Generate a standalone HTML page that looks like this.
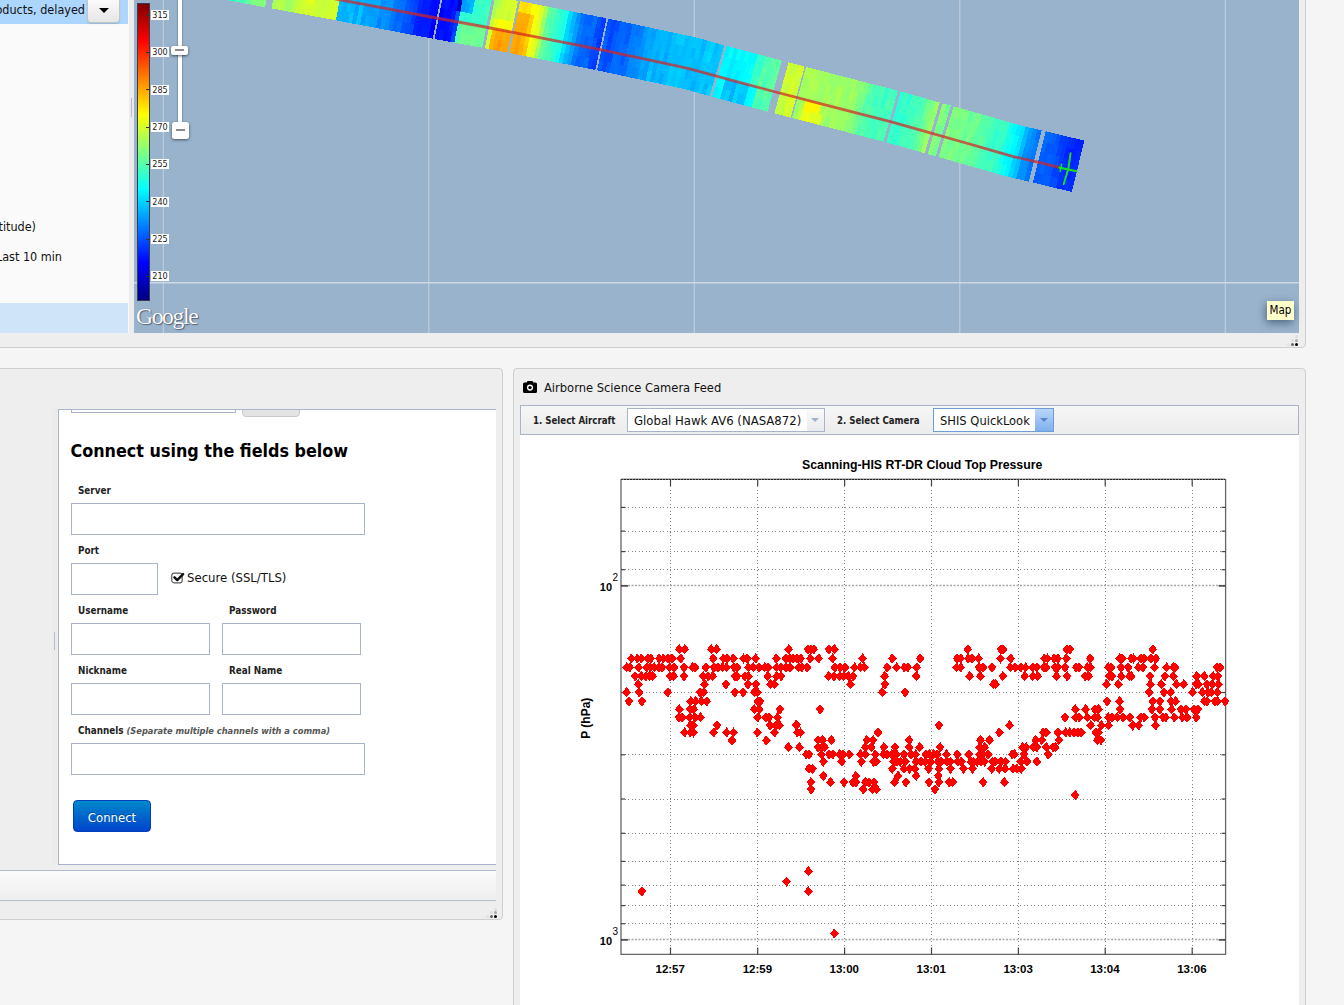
<!DOCTYPE html>
<html><head><meta charset="utf-8"><title>Mission Tools Suite</title>
<style>
html,body{margin:0;padding:0}
body{width:1344px;height:1005px;overflow:hidden;position:relative;background:#f5f5f5;font-stretch:condensed;font-family:"DejaVu Sans Condensed","DejaVu Sans","Liberation Sans",sans-serif;font-size:13px;color:#111}
.abs{position:absolute}
.panel{position:absolute;background:#eeeeee;border:1px solid #cfcfcf;border-radius:4px;box-sizing:border-box}
.inp{position:absolute;background:#fff;border:1px solid #a9b4c8;box-sizing:border-box}
.lbl{position:absolute;font-weight:bold;font-size:9.8px;color:#222;white-space:nowrap}
.cl{position:absolute;left:151px;width:18px;height:10px;background:#fff;font-size:9px;line-height:10px;text-align:center;color:#222;font-family:"DejaVu Sans","Liberation Sans",sans-serif}
.ct{position:absolute;left:146px;width:4px;height:1px;background:#333}
.dot{position:absolute;width:3px;height:3px;border-radius:50%}
</style></head><body>

<!-- ===== top panel ===== -->
<div class="panel" style="left:-10px;top:-10px;width:1316px;height:358px"></div>
<!-- left sidebar -->
<div class="abs" style="left:0;top:0;width:129px;height:333px;background:#fafafa"></div>
<div class="abs" style="left:0;top:0;width:128px;height:24px;background:#add6ff"></div>
<div class="abs" style="left:-20px;top:2px;width:105px;text-align:right;white-space:nowrap;font-size:12.5px;line-height:16px;color:#111">oducts, delayed</div>
<div class="abs" style="left:87px;top:-6px;width:33px;height:28.5px;box-sizing:border-box;border:1px solid #c4c4c4;border-radius:4px;background:linear-gradient(#ffffff,#e6e6e6);box-shadow:0 1px 1px rgba(0,0,0,.15)"></div>
<div class="abs" style="left:99px;top:8px;width:0;height:0;border-left:5px solid transparent;border-right:5px solid transparent;border-top:5px solid #000"></div>
<div class="abs" style="left:-20px;top:219px;width:56px;text-align:right;white-space:nowrap;font-size:12.5px;line-height:16px">titude)</div>
<div class="abs" style="left:-20px;top:249px;width:82px;text-align:right;white-space:nowrap;font-size:12.5px;line-height:16px">Last 10 min</div>
<div class="abs" style="left:0;top:303px;width:128px;height:30px;background:#cfe3f9"></div>
<!-- splitter -->
<div class="abs" style="left:129px;top:0;width:5px;height:333px;background:#ebebeb"></div>
<div class="abs" style="left:131px;top:98px;width:1px;height:19px;background:#b8bcc8"></div>

<!-- map -->
<div class="abs" id="map" style="left:134px;top:0;width:1165px;height:333px;background:#99b3cc;overflow:hidden">
<svg class="abs" style="left:0;top:0" width="1165" height="333" viewBox="134 0 1165 333">
<g stroke="#c3d0de" stroke-width="1.2" opacity="0.9">
<line x1="163.3" y1="0" x2="163.3" y2="333"/><line x1="428.8" y1="0" x2="428.8" y2="333"/><line x1="694.3" y1="0" x2="694.3" y2="333"/><line x1="959.8" y1="0" x2="959.8" y2="333"/><line x1="1225.3" y1="0" x2="1225.3" y2="333"/>
<line x1="134" y1="282.8" x2="1299" y2="282.8" stroke="#d3dde8" stroke-width="1.6"/>
</g>
<g shape-rendering="crispEdges">
<path fill="#19ffe6" d="M224.0 -0.4L228.4 0.4L230.5 -10.3L226.1 -11.1"/>
<path fill="#25ffda" d="M226.0 -10.7L230.4 -9.9L232.5 -20.6L228.1 -21.4"/>
<path fill="#17ffe8" d="M228.0 -21.0L232.4 -20.2L234.5 -30.9L230.1 -31.7"/>
<path fill="#22ffdd" d="M230.0 -31.3L234.4 -30.5L236.5 -41.2L232.1 -42.0"/>
<path fill="#1effe1" d="M232.0 -41.6L236.4 -40.8L238.5 -51.5L234.1 -52.3"/>
<path fill="#26ffd9" d="M228.1 0.4L232.5 1.2L234.5 -9.5L230.2 -10.3"/>
<path fill="#1bffe4" d="M230.1 -10.0L234.5 -9.1L236.5 -19.8L232.2 -20.7"/>
<path fill="#24ffdb" d="M232.1 -20.3L236.5 -19.4L238.5 -30.1L234.2 -31.0"/>
<path fill="#1cffe3" d="M234.1 -30.6L238.5 -29.8L240.5 -40.5L236.2 -41.3"/>
<path fill="#1cffe3" d="M236.1 -40.9L240.5 -40.1L242.5 -50.8L238.2 -51.6"/>
<path fill="#43ffbc" d="M232.2 1.1L236.5 1.9L238.6 -8.8L234.2 -9.6"/>
<path fill="#31ffce" d="M234.2 -9.2L238.5 -8.4L240.6 -19.1L236.2 -19.9"/>
<path fill="#34ffcb" d="M236.2 -19.5L240.5 -18.7L242.6 -29.4L238.2 -30.2"/>
<path fill="#3effc1" d="M238.2 -29.8L242.5 -29.0L244.6 -39.7L240.2 -40.5"/>
<path fill="#46ffb9" d="M240.2 -40.1L244.5 -39.3L246.6 -50.0L242.2 -50.8"/>
<path fill="#47ffb8" d="M236.2 1.9L240.6 2.7L242.7 -8.0L238.3 -8.8"/>
<path fill="#56ffa9" d="M238.2 -8.4L242.6 -7.6L244.7 -18.3L240.3 -19.1"/>
<path fill="#3fffc0" d="M240.2 -18.7L244.6 -17.9L246.7 -28.6L242.3 -29.4"/>
<path fill="#53ffac" d="M242.2 -29.1L246.6 -28.2L248.7 -38.9L244.3 -39.8"/>
<path fill="#45ffba" d="M244.2 -39.4L248.6 -38.6L250.7 -49.3L246.3 -50.1"/>
<path fill="#42ffbd" d="M240.3 2.6L244.7 3.4L246.8 -7.3L242.4 -8.1"/>
<path fill="#46ffb9" d="M242.3 -7.7L246.7 -6.9L248.8 -17.6L244.4 -18.4"/>
<path fill="#53ffac" d="M244.3 -18.0L248.7 -17.2L250.8 -27.9L246.4 -28.7"/>
<path fill="#43ffbc" d="M246.3 -28.3L250.7 -27.5L252.8 -38.2L248.4 -39.0"/>
<path fill="#4dffb2" d="M248.3 -38.6L252.7 -37.8L254.8 -48.5L250.4 -49.3"/>
<path fill="#5fffa0" d="M244.4 3.4L248.8 4.2L250.9 -6.5L246.5 -7.3"/>
<path fill="#64ff9b" d="M246.4 -6.9L250.8 -6.1L252.9 -16.8L248.5 -17.6"/>
<path fill="#58ffa7" d="M248.4 -17.2L252.8 -16.4L254.9 -27.1L250.5 -27.9"/>
<path fill="#58ffa7" d="M250.4 -27.5L254.8 -26.7L256.9 -37.4L252.5 -38.2"/>
<path fill="#5bffa4" d="M252.4 -37.9L256.8 -37.0L258.9 -47.7L254.5 -48.6"/>
<path fill="#6dff92" d="M248.5 4.1L252.9 4.9L254.9 -5.8L250.6 -6.6"/>
<path fill="#6bff94" d="M250.5 -6.2L254.9 -5.4L256.9 -16.1L252.6 -16.9"/>
<path fill="#71ff8e" d="M252.5 -16.5L256.9 -15.7L258.9 -26.4L254.6 -27.2"/>
<path fill="#6eff91" d="M254.5 -26.8L258.9 -26.0L260.9 -36.7L256.6 -37.5"/>
<path fill="#6aff95" d="M256.5 -37.1L260.9 -36.3L262.9 -47.0L258.6 -47.8"/>
<path fill="#82ff7d" d="M252.6 4.9L256.9 5.7L259.0 -5.0L254.6 -5.8"/>
<path fill="#77ff88" d="M254.6 -5.4L258.9 -4.6L261.0 -15.3L256.6 -16.1"/>
<path fill="#7fff80" d="M256.6 -15.7L260.9 -14.9L263.0 -25.6L258.6 -26.4"/>
<path fill="#7eff81" d="M258.6 -26.0L262.9 -25.2L265.0 -35.9L260.6 -36.7"/>
<path fill="#87ff78" d="M260.6 -36.3L264.9 -35.5L267.0 -46.2L262.6 -47.0"/>
<path fill="#82ff7d" d="M256.6 5.6L261.0 6.5L263.1 -4.2L258.7 -5.1"/>
<path fill="#93ff6c" d="M258.6 -4.7L263.0 -3.9L265.1 -14.6L260.7 -15.4"/>
<path fill="#7eff81" d="M260.6 -15.0L265.0 -14.2L267.1 -24.9L262.7 -25.7"/>
<path fill="#85ff7a" d="M262.6 -25.3L267.0 -24.5L269.1 -35.2L264.7 -36.0"/>
<path fill="#8dff72" d="M264.6 -35.6L269.0 -34.8L271.1 -45.5L266.7 -46.3"/>
<path fill="#82ff7d" d="M260.7 6.4L265.1 7.2L267.2 -3.5L262.8 -4.3"/>
<path fill="#77ff88" d="M262.7 -3.9L267.1 -3.1L269.2 -13.8L264.8 -14.6"/>
<path fill="#87ff78" d="M264.7 -14.2L269.1 -13.4L271.2 -24.1L266.8 -24.9"/>
<path fill="#89ff76" d="M266.7 -24.5L271.1 -23.7L273.2 -34.4L268.8 -35.2"/>
<path fill="#84ff7b" d="M268.7 -34.8L273.1 -34.0L275.2 -44.7L270.8 -45.5"/>
<path fill="#a5ff5a" d="M271.4 8.4L275.7 9.2L277.8 -1.5L273.5 -2.3"/>
<path fill="#aeff51" d="M273.4 -1.9L277.7 -1.1L279.8 -11.8L275.5 -12.6"/>
<path fill="#acff53" d="M275.4 -12.2L279.7 -11.4L281.8 -22.1L277.5 -22.9"/>
<path fill="#abff54" d="M277.4 -22.5L281.7 -21.7L283.8 -32.4L279.5 -33.2"/>
<path fill="#a8ff57" d="M279.4 -32.9L283.7 -32.0L285.8 -42.7L281.5 -43.6"/>
<path fill="#b7ff48" d="M275.4 9.1L279.7 9.9L281.8 -0.8L277.5 -1.6"/>
<path fill="#abff54" d="M277.4 -1.2L281.8 -0.4L283.8 -11.1L279.5 -11.9"/>
<path fill="#b0ff4f" d="M279.4 -11.5L283.8 -10.7L285.8 -21.4L281.5 -22.2"/>
<path fill="#a1ff5e" d="M281.4 -21.8L285.8 -21.0L287.8 -31.7L283.5 -32.5"/>
<path fill="#b1ff4e" d="M283.4 -32.1L287.8 -31.3L289.8 -42.0L285.5 -42.8"/>
<path fill="#b6ff49" d="M279.4 9.9L283.8 10.7L285.9 -0.0L281.5 -0.8"/>
<path fill="#b2ff4d" d="M281.5 -0.4L285.8 0.4L287.9 -10.3L283.5 -11.1"/>
<path fill="#a5ff5a" d="M283.5 -10.7L287.8 -9.9L289.9 -20.6L285.5 -21.4"/>
<path fill="#a8ff57" d="M285.5 -21.1L289.8 -20.3L291.9 -31.0L287.5 -31.8"/>
<path fill="#aeff51" d="M287.5 -31.4L291.8 -30.6L293.9 -41.3L289.5 -42.1"/>
<path fill="#9dff62" d="M283.5 10.6L287.8 11.4L289.9 0.7L285.6 -0.1"/>
<path fill="#96ff69" d="M285.5 0.3L289.8 1.1L291.9 -9.6L287.6 -10.4"/>
<path fill="#95ff6a" d="M287.5 -10.0L291.8 -9.2L293.9 -19.9L289.6 -20.7"/>
<path fill="#94ff6b" d="M289.5 -20.3L293.8 -19.5L295.9 -30.2L291.6 -31.0"/>
<path fill="#a5ff5a" d="M291.5 -30.6L295.8 -29.8L297.9 -40.5L293.6 -41.3"/>
<path fill="#9eff61" d="M287.5 11.4L291.8 12.2L293.9 1.5L289.6 0.7"/>
<path fill="#a2ff5d" d="M289.5 1.1L293.8 1.9L295.9 -8.8L291.6 -9.6"/>
<path fill="#adff52" d="M291.5 -9.3L295.8 -8.5L297.9 -19.2L293.6 -20.0"/>
<path fill="#9aff65" d="M293.5 -19.6L297.8 -18.8L299.9 -29.5L295.6 -30.3"/>
<path fill="#a3ff5c" d="M295.5 -29.9L299.8 -29.1L301.9 -39.8L297.6 -40.6"/>
<path fill="#bbff44" d="M291.5 12.1L295.9 12.9L297.9 2.2L293.6 1.4"/>
<path fill="#baff45" d="M293.5 1.8L297.9 2.6L299.9 -8.1L295.6 -8.9"/>
<path fill="#bbff44" d="M295.5 -8.5L299.9 -7.7L301.9 -18.4L297.6 -19.2"/>
<path fill="#acff53" d="M297.5 -18.8L301.9 -18.0L303.9 -28.7L299.6 -29.5"/>
<path fill="#b0ff4f" d="M299.5 -29.1L303.9 -28.3L306.0 -39.0L301.6 -39.8"/>
<path fill="#c5ff3a" d="M295.6 12.9L299.9 13.7L302.0 3.0L297.6 2.2"/>
<path fill="#c7ff38" d="M297.6 2.5L301.9 3.3L304.0 -7.4L299.6 -8.2"/>
<path fill="#b3ff4c" d="M299.6 -7.8L303.9 -7.0L306.0 -17.7L301.6 -18.5"/>
<path fill="#b3ff4c" d="M301.6 -18.1L305.9 -17.3L308.0 -28.0L303.6 -28.8"/>
<path fill="#b5ff4a" d="M303.6 -28.4L307.9 -27.6L310.0 -38.3L305.7 -39.1"/>
<path fill="#cfff30" d="M299.6 13.6L303.9 14.4L306.0 3.7L301.7 2.9"/>
<path fill="#d2ff2d" d="M301.6 3.3L305.9 4.1L308.0 -6.6L303.7 -7.4"/>
<path fill="#caff35" d="M303.6 -7.0L307.9 -6.2L310.0 -16.9L305.7 -17.7"/>
<path fill="#c4ff3b" d="M305.6 -17.3L309.9 -16.5L312.0 -27.2L307.7 -28.0"/>
<path fill="#ceff31" d="M307.6 -27.6L311.9 -26.8L314.0 -37.5L309.7 -38.3"/>
<path fill="#d5ff2a" d="M303.6 14.3L307.9 15.1L310.0 4.4L305.7 3.6"/>
<path fill="#deff21" d="M305.6 4.0L309.9 4.8L312.0 -5.9L307.7 -6.7"/>
<path fill="#d8ff27" d="M307.6 -6.3L311.9 -5.5L314.0 -16.2L309.7 -17.0"/>
<path fill="#d3ff2c" d="M309.6 -16.6L314.0 -15.8L316.0 -26.5L311.7 -27.3"/>
<path fill="#d6ff29" d="M311.6 -26.9L316.0 -26.1L318.0 -36.8L313.7 -37.6"/>
<path fill="#d0ff2f" d="M307.6 15.1L312.0 15.9L314.0 5.2L309.7 4.4"/>
<path fill="#e4ff1b" d="M309.6 4.8L314.0 5.6L316.1 -5.1L311.7 -5.9"/>
<path fill="#e1ff1e" d="M311.6 -5.5L316.0 -4.7L318.1 -15.4L313.7 -16.2"/>
<path fill="#e4ff1b" d="M313.7 -15.8L318.0 -15.0L320.1 -25.7L315.7 -26.5"/>
<path fill="#e2ff1d" d="M315.7 -26.1L320.0 -25.3L322.1 -36.0L317.7 -36.8"/>
<path fill="#d1ff2e" d="M311.7 15.8L316.0 16.6L318.1 5.9L313.7 5.1"/>
<path fill="#caff35" d="M313.7 5.5L318.0 6.3L320.1 -4.4L315.8 -5.2"/>
<path fill="#d7ff28" d="M315.7 -4.8L320.0 -4.0L322.1 -14.7L317.8 -15.5"/>
<path fill="#c9ff36" d="M317.7 -15.1L322.0 -14.3L324.1 -25.0L319.8 -25.8"/>
<path fill="#c9ff36" d="M319.7 -25.4L324.0 -24.6L326.1 -35.3L321.8 -36.1"/>
<path fill="#c7ff38" d="M315.7 16.6L320.0 17.4L322.1 6.7L317.8 5.9"/>
<path fill="#cbff34" d="M317.7 6.3L322.0 7.1L324.1 -3.6L319.8 -4.4"/>
<path fill="#c4ff3b" d="M319.7 -4.0L324.0 -3.2L326.1 -13.9L321.8 -14.7"/>
<path fill="#c3ff3c" d="M321.7 -14.3L326.0 -13.5L328.1 -24.2L323.8 -25.0"/>
<path fill="#c7ff38" d="M323.7 -24.6L328.1 -23.8L330.2 -34.5L325.8 -35.3"/>
<path fill="#c9ff36" d="M319.7 17.3L324.0 18.1L326.1 7.4L321.8 6.6"/>
<path fill="#c1ff3e" d="M321.7 7.0L326.0 7.8L328.1 -2.9L323.8 -3.7"/>
<path fill="#d6ff29" d="M323.7 -3.3L328.1 -2.5L330.2 -13.2L325.8 -14.0"/>
<path fill="#cfff30" d="M325.7 -13.6L330.1 -12.8L332.2 -23.5L327.8 -24.3"/>
<path fill="#c4ff3b" d="M327.8 -23.9L332.1 -23.1L334.2 -33.8L329.9 -34.6"/>
<path fill="#ccff33" d="M323.7 18.1L328.0 18.9L330.1 8.2L325.8 7.4"/>
<path fill="#cdff32" d="M325.7 7.8L330.1 8.6L332.2 -2.1L327.8 -2.9"/>
<path fill="#c7ff38" d="M327.8 -2.5L332.1 -1.7L334.2 -12.4L329.9 -13.2"/>
<path fill="#d9ff26" d="M329.8 -12.8L334.1 -12.0L336.2 -22.7L331.9 -23.5"/>
<path fill="#dcff23" d="M331.8 -23.1L336.1 -22.3L338.2 -33.0L333.9 -33.8"/>
<path fill="#d5ff2a" d="M327.7 18.8L332.1 19.6L334.2 8.9L329.8 8.1"/>
<path fill="#cbff34" d="M329.8 8.5L334.1 9.3L336.2 -1.4L331.9 -2.2"/>
<path fill="#ccff33" d="M331.8 -1.8L336.1 -1.0L338.2 -11.7L333.9 -12.5"/>
<path fill="#d2ff2d" d="M333.8 -12.1L338.1 -11.3L340.2 -22.0L335.9 -22.8"/>
<path fill="#d0ff2f" d="M335.8 -22.4L340.2 -21.6L342.3 -32.3L337.9 -33.1"/>
<path fill="#d6ff29" d="M331.8 19.6L336.1 20.4L338.2 9.7L333.9 8.9"/>
<path fill="#d3ff2c" d="M333.8 9.3L338.1 10.1L340.2 -0.6L335.9 -1.4"/>
<path fill="#e9ff16" d="M335.8 -1.0L340.1 -0.2L342.2 -10.9L337.9 -11.7"/>
<path fill="#dfff20" d="M337.8 -11.3L342.2 -10.5L344.3 -21.2L339.9 -22.0"/>
<path fill="#d6ff29" d="M339.9 -21.7L344.2 -20.8L346.3 -31.5L342.0 -32.3"/>
<path fill="#00b1ff" d="M335.8 20.3L340.1 21.1L342.2 10.4L337.9 9.6"/>
<path fill="#00bdff" d="M337.8 10.0L342.1 10.8L344.2 0.1L339.9 -0.7"/>
<path fill="#00c8ff" d="M339.8 -0.3L344.2 0.5L346.3 -10.2L341.9 -11.0"/>
<path fill="#00c6ff" d="M341.9 -10.6L346.2 -9.8L348.3 -20.5L344.0 -21.3"/>
<path fill="#00c2ff" d="M343.9 -20.9L348.2 -20.1L350.4 -30.8L346.0 -31.6"/>
<path fill="#00b1ff" d="M339.8 21.1L344.1 21.9L346.2 11.2L341.9 10.4"/>
<path fill="#00acff" d="M341.8 10.8L346.2 11.6L348.3 0.9L343.9 0.1"/>
<path fill="#00baff" d="M343.9 0.5L348.2 1.3L350.3 -9.4L346.0 -10.2"/>
<path fill="#00b5ff" d="M345.9 -9.8L350.2 -9.0L352.4 -19.7L348.0 -20.5"/>
<path fill="#00bbff" d="M347.9 -20.1L352.3 -19.3L354.4 -30.0L350.1 -30.8"/>
<path fill="#00adff" d="M343.8 21.8L348.1 22.7L350.3 12.0L345.9 11.2"/>
<path fill="#00bbff" d="M345.9 11.5L350.2 12.4L352.3 1.7L348.0 0.9"/>
<path fill="#00bfff" d="M347.9 1.2L352.2 2.1L354.3 -8.6L350.0 -9.4"/>
<path fill="#00bcff" d="M349.9 -9.1L354.3 -8.2L356.4 -18.9L352.1 -19.7"/>
<path fill="#00bbff" d="M352.0 -19.4L356.3 -18.5L358.4 -29.2L354.1 -30.0"/>
<path fill="#00c3ff" d="M347.8 22.6L352.2 23.4L354.3 12.7L350.0 11.9"/>
<path fill="#00b7ff" d="M349.9 12.3L354.2 13.1L356.3 2.4L352.0 1.6"/>
<path fill="#00beff" d="M351.9 2.0L356.2 2.8L358.4 -7.9L354.0 -8.7"/>
<path fill="#00baff" d="M354.0 -8.3L358.3 -7.5L360.4 -18.2L356.1 -19.0"/>
<path fill="#00b2ff" d="M356.0 -18.6L360.3 -17.8L362.5 -28.5L358.1 -29.3"/>
<path fill="#00a3ff" d="M351.9 23.4L356.2 24.2L358.3 13.5L354.0 12.7"/>
<path fill="#00a2ff" d="M353.9 13.1L358.2 13.9L360.4 3.2L356.0 2.4"/>
<path fill="#00adff" d="M355.9 2.8L360.3 3.6L362.4 -7.1L358.1 -7.9"/>
<path fill="#00b3ff" d="M358.0 -7.5L362.3 -6.7L364.5 -17.4L360.1 -18.2"/>
<path fill="#00a7ff" d="M360.0 -17.8L364.4 -17.0L366.5 -27.7L362.2 -28.5"/>
<path fill="#00c6ff" d="M355.9 24.1L360.2 25.0L362.3 14.3L358.0 13.4"/>
<path fill="#00c5ff" d="M357.9 13.8L362.3 14.7L364.4 4.0L360.1 3.1"/>
<path fill="#00b7ff" d="M360.0 3.5L364.3 4.4L366.4 -6.3L362.1 -7.2"/>
<path fill="#00b3ff" d="M362.0 -6.8L366.4 -5.9L368.5 -16.6L364.2 -17.5"/>
<path fill="#00b3ff" d="M364.1 -17.1L368.4 -16.2L370.5 -26.9L366.2 -27.8"/>
<path fill="#009aff" d="M359.9 24.9L364.2 25.7L366.4 15.0L362.0 14.2"/>
<path fill="#00a5ff" d="M362.0 14.6L366.3 15.4L368.4 4.7L364.1 3.9"/>
<path fill="#00abff" d="M364.0 4.3L368.3 5.1L370.5 -5.6L366.1 -6.4"/>
<path fill="#00aaff" d="M366.1 -6.0L370.4 -5.2L372.5 -15.9L368.2 -16.7"/>
<path fill="#00a1ff" d="M368.1 -16.3L372.4 -15.5L374.6 -26.2L370.2 -27.0"/>
<path fill="#00aeff" d="M363.9 25.7L368.3 26.5L370.4 15.8L366.1 15.0"/>
<path fill="#009cff" d="M366.0 15.4L370.3 16.2L372.4 5.5L368.1 4.7"/>
<path fill="#00abff" d="M368.0 5.1L372.4 5.9L374.5 -4.8L370.2 -5.6"/>
<path fill="#00b1ff" d="M370.1 -5.2L374.4 -4.4L376.5 -15.1L372.2 -15.9"/>
<path fill="#00aeff" d="M372.1 -15.5L376.5 -14.7L378.6 -25.4L374.3 -26.2"/>
<path fill="#00a2ff" d="M368.0 26.4L372.3 27.2L374.4 16.6L370.1 15.7"/>
<path fill="#009bff" d="M370.0 16.1L374.3 16.9L376.5 6.3L372.1 5.4"/>
<path fill="#00aaff" d="M372.1 5.8L376.4 6.6L378.5 -4.0L374.2 -4.9"/>
<path fill="#009fff" d="M374.1 -4.5L378.4 -3.7L380.6 -14.3L376.2 -15.2"/>
<path fill="#00aaff" d="M376.2 -14.8L380.5 -13.9L382.6 -24.6L378.3 -25.5"/>
<path fill="#00a0ff" d="M372.0 27.2L376.3 28.0L378.4 17.3L374.1 16.5"/>
<path fill="#00a0ff" d="M374.0 16.9L378.4 17.7L380.5 7.0L376.2 6.2"/>
<path fill="#00adff" d="M376.1 6.6L380.4 7.4L382.5 -3.3L378.2 -4.1"/>
<path fill="#00a8ff" d="M378.1 -3.7L382.5 -2.9L384.6 -13.6L380.3 -14.4"/>
<path fill="#009aff" d="M380.2 -14.0L384.5 -13.2L386.6 -23.9L382.3 -24.7"/>
<path fill="#007eff" d="M376.0 27.9L380.3 28.8L382.5 18.1L378.1 17.3"/>
<path fill="#0090ff" d="M378.1 17.7L382.4 18.5L384.5 7.8L380.2 7.0"/>
<path fill="#008eff" d="M380.1 7.4L384.4 8.2L386.6 -2.5L382.2 -3.3"/>
<path fill="#007dff" d="M382.2 -2.9L386.5 -2.1L388.6 -12.8L384.3 -13.6"/>
<path fill="#008eff" d="M384.2 -13.2L388.5 -12.4L390.7 -23.1L386.3 -23.9"/>
<path fill="#0097ff" d="M380.0 28.7L384.4 29.5L386.5 18.8L382.2 18.0"/>
<path fill="#008fff" d="M382.1 18.4L386.4 19.2L388.5 8.5L384.2 7.7"/>
<path fill="#0094ff" d="M384.1 8.1L388.5 8.9L390.6 -1.8L386.3 -2.6"/>
<path fill="#008aff" d="M386.2 -2.2L390.5 -1.4L392.6 -12.1L388.3 -12.9"/>
<path fill="#0087ff" d="M388.2 -12.5L392.6 -11.7L394.7 -22.3L390.4 -23.2"/>
<path fill="#008eff" d="M384.1 29.5L388.4 30.3L390.5 19.6L386.2 18.8"/>
<path fill="#008bff" d="M386.1 19.2L390.4 20.0L392.6 9.3L388.2 8.5"/>
<path fill="#0095ff" d="M388.2 8.9L392.5 9.7L394.6 -1.0L390.3 -1.8"/>
<path fill="#0089ff" d="M390.2 -1.4L394.5 -0.6L396.7 -11.3L392.3 -12.1"/>
<path fill="#0093ff" d="M392.3 -11.7L396.6 -10.9L398.7 -21.6L394.4 -22.4"/>
<path fill="#0078ff" d="M388.1 30.2L392.4 31.1L394.6 20.4L390.2 19.5"/>
<path fill="#0079ff" d="M390.1 19.9L394.5 20.8L396.6 10.1L392.3 9.3"/>
<path fill="#007aff" d="M392.2 9.6L396.5 10.5L398.7 -0.2L394.3 -1.0"/>
<path fill="#0078ff" d="M394.2 -0.7L398.6 0.2L400.7 -10.5L396.4 -11.3"/>
<path fill="#0081ff" d="M396.3 -11.0L400.6 -10.1L402.8 -20.8L398.4 -21.6"/>
<path fill="#0067ff" d="M392.1 31.0L396.5 31.8L398.6 21.1L394.3 20.3"/>
<path fill="#005fff" d="M394.2 20.7L398.5 21.5L400.6 10.8L396.3 10.0"/>
<path fill="#0073ff" d="M396.2 10.4L400.6 11.2L402.7 0.5L398.4 -0.3"/>
<path fill="#0065ff" d="M398.3 0.1L402.6 0.9L404.7 -9.8L400.4 -10.6"/>
<path fill="#0067ff" d="M400.3 -10.2L404.7 -9.4L406.8 -20.1L402.5 -20.9"/>
<path fill="#0072ff" d="M396.2 31.8L400.5 32.6L402.6 21.9L398.3 21.1"/>
<path fill="#0066ff" d="M398.2 21.5L402.5 22.3L404.7 11.6L400.3 10.8"/>
<path fill="#0072ff" d="M400.3 11.2L404.6 12.0L406.7 1.3L402.4 0.5"/>
<path fill="#0068ff" d="M402.3 0.9L406.6 1.7L408.8 -9.0L404.4 -9.8"/>
<path fill="#0069ff" d="M404.4 -9.4L408.7 -8.6L410.8 -19.3L406.5 -20.1"/>
<path fill="#0052ff" d="M400.2 32.5L404.5 33.4L406.6 22.7L402.3 21.8"/>
<path fill="#005cff" d="M402.2 22.2L406.6 23.1L408.7 12.4L404.4 11.5"/>
<path fill="#0056ff" d="M404.3 11.9L408.6 12.8L410.7 2.1L406.4 1.2"/>
<path fill="#0051ff" d="M406.3 1.6L410.7 2.5L412.8 -8.2L408.5 -9.1"/>
<path fill="#0065ff" d="M408.4 -8.7L412.7 -7.8L414.8 -18.5L410.5 -19.4"/>
<path fill="#004cff" d="M404.2 33.3L408.6 34.1L410.7 23.4L406.3 22.6"/>
<path fill="#0052ff" d="M406.3 23.0L410.6 23.8L412.7 13.1L408.4 12.3"/>
<path fill="#004eff" d="M408.3 12.7L412.6 13.5L414.8 2.8L410.4 2.0"/>
<path fill="#0048ff" d="M410.4 2.4L414.7 3.2L416.8 -7.5L412.5 -8.3"/>
<path fill="#004dff" d="M412.4 -7.9L416.7 -7.1L418.8 -17.8L414.5 -18.6"/>
<path fill="#0048ff" d="M408.3 34.1L412.6 34.9L414.7 24.2L410.4 23.4"/>
<path fill="#0037ff" d="M410.3 23.8L414.6 24.6L416.7 13.9L412.4 13.1"/>
<path fill="#0043ff" d="M412.3 13.5L416.7 14.3L418.8 3.6L414.5 2.8"/>
<path fill="#003bff" d="M414.4 3.2L418.7 4.0L420.8 -6.7L416.5 -7.5"/>
<path fill="#003cff" d="M416.4 -7.1L420.7 -6.3L422.9 -17.0L418.5 -17.8"/>
<path fill="#001fff" d="M412.3 34.8L416.6 35.6L418.7 25.0L414.4 24.1"/>
<path fill="#0020ff" d="M414.3 24.5L418.7 25.3L420.8 14.7L416.4 13.8"/>
<path fill="#0025ff" d="M416.4 14.2L420.7 15.0L422.8 4.4L418.5 3.5"/>
<path fill="#0029ff" d="M418.4 3.9L422.7 4.7L424.8 -6.0L420.5 -6.8"/>
<path fill="#001dff" d="M420.4 -6.4L424.8 -5.6L426.9 -16.3L422.6 -17.1"/>
<path fill="#0019ff" d="M416.3 35.6L420.7 36.4L422.8 25.7L418.4 24.9"/>
<path fill="#0019ff" d="M418.4 25.3L422.7 26.1L424.8 15.4L420.5 14.6"/>
<path fill="#001dff" d="M420.4 15.0L424.7 15.8L426.8 5.1L422.5 4.3"/>
<path fill="#0018ff" d="M422.4 4.7L426.7 5.5L428.8 -5.2L424.5 -6.0"/>
<path fill="#001aff" d="M424.5 -5.6L428.8 -4.8L430.9 -15.5L426.6 -16.3"/>
<path fill="#001eff" d="M420.4 36.4L424.7 37.2L426.8 26.5L422.5 25.7"/>
<path fill="#0018ff" d="M422.4 26.1L426.7 26.9L428.8 16.2L424.5 15.4"/>
<path fill="#001cff" d="M424.4 15.8L428.7 16.6L430.8 5.9L426.5 5.1"/>
<path fill="#001eff" d="M426.4 5.4L430.8 6.3L432.9 -4.4L428.5 -5.2"/>
<path fill="#000dff" d="M428.5 -4.9L432.8 -4.0L434.9 -14.7L430.6 -15.5"/>
<path fill="#001eff" d="M424.4 37.1L428.7 37.9L430.8 27.2L426.5 26.4"/>
<path fill="#001bff" d="M426.4 26.8L430.8 27.6L432.8 16.9L428.5 16.1"/>
<path fill="#000aff" d="M428.4 16.5L432.8 17.3L434.9 6.6L430.5 5.8"/>
<path fill="#000aff" d="M430.5 6.2L434.8 7.0L436.9 -3.7L432.6 -4.5"/>
<path fill="#0012ff" d="M432.5 -4.1L436.8 -3.3L438.9 -14.0L434.6 -14.8"/>
<path fill="#0000fe" d="M428.4 37.9L432.8 38.7L434.9 28.0L430.5 27.2"/>
<path fill="#0000fa" d="M430.5 27.6L434.8 28.4L436.9 17.7L432.5 16.9"/>
<path fill="#0009ff" d="M432.5 17.3L436.8 18.1L438.9 7.4L434.6 6.6"/>
<path fill="#000cff" d="M434.5 7.0L438.8 7.8L440.9 -2.9L436.6 -3.7"/>
<path fill="#000fff" d="M436.5 -3.3L440.8 -2.5L442.9 -13.2L438.6 -14.0"/>
<path fill="#000dff" d="M434.5 39.0L438.7 39.8L440.8 29.1L436.6 28.3"/>
<path fill="#000cff" d="M436.5 28.7L440.8 29.5L442.8 18.8L438.6 18.0"/>
<path fill="#0000fe" d="M438.5 18.4L442.8 19.2L444.8 8.5L440.6 7.7"/>
<path fill="#0011ff" d="M440.5 8.1L444.8 8.9L446.8 -1.8L442.6 -2.6"/>
<path fill="#0013ff" d="M442.5 -2.2L446.8 -1.5L448.8 -12.2L444.6 -12.9"/>
<path fill="#0017ff" d="M438.4 39.7L442.7 40.5L444.8 29.8L440.5 29.0"/>
<path fill="#0009ff" d="M440.5 29.4L444.7 30.2L446.8 19.5L442.5 18.7"/>
<path fill="#000bff" d="M442.5 19.1L446.7 19.9L448.8 9.2L444.5 8.4"/>
<path fill="#0018ff" d="M444.5 8.8L448.7 9.6L450.8 -1.1L446.5 -1.9"/>
<path fill="#0014ff" d="M446.5 -1.5L450.7 -0.7L452.8 -11.4L448.5 -12.2"/>
<path fill="#000bff" d="M442.4 40.4L446.7 41.2L448.8 30.5L444.5 29.7"/>
<path fill="#000dff" d="M444.4 30.1L448.7 30.9L450.8 20.2L446.5 19.4"/>
<path fill="#0009ff" d="M446.4 19.8L450.7 20.6L452.7 9.9L448.5 9.1"/>
<path fill="#0005ff" d="M448.4 9.5L452.7 10.3L454.7 -0.4L450.5 -1.2"/>
<path fill="#0008ff" d="M450.4 -0.8L454.7 -0.0L456.7 -10.7L452.5 -11.5"/>
<path fill="#0011ff" d="M446.4 41.2L450.7 42.0L452.7 31.3L448.5 30.5"/>
<path fill="#001eff" d="M448.4 30.9L452.6 31.7L454.7 20.9L450.5 20.2"/>
<path fill="#001bff" d="M450.4 20.6L454.6 21.3L456.7 10.6L452.4 9.9"/>
<path fill="#0011ff" d="M452.4 10.2L456.6 11.0L458.7 0.3L454.4 -0.5"/>
<path fill="#0019ff" d="M454.4 -0.1L458.6 0.7L460.7 -10.0L456.4 -10.8"/>
<path fill="#0047ff" d="M450.4 41.9L454.6 42.7L456.7 32.0L452.4 31.2"/>
<path fill="#003cff" d="M452.3 31.6L456.6 32.4L458.7 21.7L454.4 20.9"/>
<path fill="#0053ff" d="M454.3 21.3L458.6 22.1L460.7 11.4L456.4 10.6"/>
<path fill="#0000c8" d="M456.3 11.0L460.6 11.8L462.7 1.1L458.4 0.3"/>
<path fill="#0000cd" d="M458.3 0.7L462.6 1.4L464.6 -9.3L460.4 -10.0"/>
<path fill="#53ffac" d="M454.3 42.6L458.6 43.4L460.6 32.7L456.4 31.9"/>
<path fill="#4effb1" d="M456.3 32.3L460.6 33.1L462.6 22.4L458.4 21.6"/>
<path fill="#2dffd2" d="M458.3 22.0L462.6 22.8L464.6 12.1L460.4 11.3"/>
<path fill="#009bff" d="M460.3 11.7L464.5 12.5L466.6 1.8L462.4 1.0"/>
<path fill="#0097ff" d="M462.3 1.4L466.5 2.2L468.6 -8.5L464.3 -9.3"/>
<path fill="#6fff90" d="M458.3 43.4L462.5 44.1L464.6 33.4L460.3 32.7"/>
<path fill="#6dff92" d="M460.3 33.0L464.5 33.8L466.6 23.1L462.3 22.3"/>
<path fill="#2cffd3" d="M462.2 22.7L466.5 23.5L468.6 12.8L464.3 12.0"/>
<path fill="#00a4ff" d="M464.2 12.4L468.5 13.2L470.6 2.5L466.3 1.7"/>
<path fill="#00b7ff" d="M466.2 2.1L470.5 2.9L472.6 -7.8L468.3 -8.6"/>
<path fill="#72ff8d" d="M462.2 44.1L466.4 44.9L468.5 34.2L464.3 33.4"/>
<path fill="#63ff9c" d="M464.2 33.8L468.5 34.6L470.5 23.9L466.3 23.1"/>
<path fill="#2fffd0" d="M466.2 23.5L470.5 24.2L472.6 13.6L468.3 12.8"/>
<path fill="#00b9ff" d="M468.2 13.2L472.5 13.9L474.6 3.2L470.3 2.5"/>
<path fill="#00b2ff" d="M470.2 2.9L474.5 3.6L476.6 -7.1L472.3 -7.8"/>
<path fill="#70ff8f" d="M466.1 44.8L470.4 45.6L472.5 34.9L468.2 34.1"/>
<path fill="#68ff97" d="M468.2 34.5L472.4 35.3L474.5 24.6L470.2 23.8"/>
<path fill="#39ffc6" d="M470.2 24.2L474.4 25.0L476.5 14.3L472.3 13.5"/>
<path fill="#28ffd7" d="M472.2 13.9L476.4 14.7L478.5 4.0L474.3 3.2"/>
<path fill="#3bffc4" d="M474.2 3.6L478.5 4.4L480.6 -6.3L476.3 -7.1"/>
<path fill="#72ff8d" d="M470.1 45.5L474.3 46.3L476.4 35.6L472.2 34.8"/>
<path fill="#68ff97" d="M472.1 35.2L476.4 36.0L478.5 25.3L474.2 24.5"/>
<path fill="#32ffcd" d="M474.1 24.9L478.4 25.7L480.5 15.0L476.2 14.2"/>
<path fill="#37ffc8" d="M476.1 14.6L480.4 15.4L482.5 4.7L478.2 3.9"/>
<path fill="#41ffbe" d="M478.2 4.3L482.4 5.1L484.5 -5.6L480.3 -6.4"/>
<path fill="#69ff96" d="M474.0 46.3L478.3 47.1L480.4 36.4L476.1 35.6"/>
<path fill="#73ff8c" d="M476.1 36.0L480.3 36.7L482.4 26.1L478.2 25.3"/>
<path fill="#39ffc6" d="M478.1 25.6L482.3 26.4L484.4 15.8L480.2 15.0"/>
<path fill="#36ffc9" d="M480.1 15.3L484.4 16.1L486.5 5.5L482.2 4.6"/>
<path fill="#37ffc8" d="M482.1 5.0L486.4 5.8L488.5 -4.9L484.2 -5.7"/>
<path fill="#6aff95" d="M478.0 47.0L482.2 47.8L484.3 37.1L480.1 36.3"/>
<path fill="#6dff92" d="M480.0 36.7L484.3 37.5L486.4 26.8L482.1 26.0"/>
<path fill="#3affc5" d="M482.0 26.4L486.3 27.2L488.4 16.5L484.1 15.7"/>
<path fill="#45ffba" d="M484.1 16.1L488.3 16.9L490.4 6.2L486.2 5.4"/>
<path fill="#39ffc6" d="M486.1 5.8L490.4 6.6L492.5 -4.1L488.2 -4.9"/>
<path fill="#cfff30" d="M484.9 48.3L488.9 49.1L491.0 38.4L487.0 37.6"/>
<path fill="#d3ff2c" d="M487.0 38.0L491.0 38.8L493.1 28.1L489.1 27.3"/>
<path fill="#cbff34" d="M489.0 27.7L493.0 28.5L495.1 17.8L491.1 17.0"/>
<path fill="#a8ff57" d="M491.0 17.4L495.1 18.2L497.2 7.5L493.2 6.7"/>
<path fill="#a2ff5d" d="M493.1 7.1L497.1 7.9L499.3 -2.8L495.2 -3.6"/>
<path fill="#ffb000" d="M488.6 49.0L492.6 49.8L494.7 39.1L490.7 38.3"/>
<path fill="#ffb900" d="M490.7 38.7L494.7 39.5L496.8 28.8L492.8 28.0"/>
<path fill="#e6ff19" d="M492.7 28.4L496.7 29.2L498.9 18.5L494.8 17.7"/>
<path fill="#c9ff36" d="M494.8 18.1L498.8 18.9L500.9 8.2L496.9 7.4"/>
<path fill="#b4ff4b" d="M496.8 7.8L500.9 8.6L503.0 -2.1L499.0 -2.9"/>
<path fill="#ffa600" d="M492.3 49.7L496.3 50.5L498.5 39.8L494.4 39.0"/>
<path fill="#ffa500" d="M494.4 39.4L498.4 40.2L500.5 29.5L496.5 28.7"/>
<path fill="#fbff04" d="M496.4 29.1L500.4 29.9L502.6 19.2L498.6 18.4"/>
<path fill="#c8ff37" d="M498.5 18.8L502.5 19.6L504.7 8.9L500.6 8.2"/>
<path fill="#cbff34" d="M500.6 8.5L504.6 9.3L506.8 -1.4L502.7 -2.1"/>
<path fill="#ff9400" d="M496.0 50.4L500.0 51.2L502.2 40.5L498.2 39.7"/>
<path fill="#ffa400" d="M498.1 40.1L502.1 40.9L504.2 30.2L500.2 29.5"/>
<path fill="#fffe00" d="M500.1 29.8L504.2 30.6L506.3 19.9L502.3 19.2"/>
<path fill="#d5ff2a" d="M502.2 19.6L506.3 20.3L508.4 9.6L504.4 8.9"/>
<path fill="#d3ff2c" d="M504.3 9.3L508.3 10.0L510.5 -0.7L506.5 -1.4"/>
<path fill="#ffa300" d="M499.7 51.1L503.7 51.9L505.9 41.2L501.9 40.5"/>
<path fill="#ffab00" d="M501.8 40.8L505.8 41.6L508.0 30.9L503.9 30.2"/>
<path fill="#efff10" d="M503.9 30.6L507.9 31.3L510.1 20.6L506.0 19.9"/>
<path fill="#c5ff3a" d="M506.0 20.3L510.0 21.0L512.1 10.4L508.1 9.6"/>
<path fill="#d5ff2a" d="M508.0 10.0L512.1 10.7L514.2 0.1L510.2 -0.7"/>
<path fill="#ffa500" d="M503.4 51.8L507.4 52.6L509.6 41.9L505.6 41.2"/>
<path fill="#ffa700" d="M505.5 41.6L509.5 42.3L511.7 31.6L507.7 30.9"/>
<path fill="#fffa00" d="M507.6 31.3L511.6 32.0L513.8 21.4L509.8 20.6"/>
<path fill="#dcff23" d="M509.7 21.0L513.7 21.7L515.9 11.1L511.8 10.3"/>
<path fill="#d7ff28" d="M511.8 10.7L515.8 11.5L518.0 0.8L513.9 0.0"/>
<path fill="#ffab00" d="M509.5 53.0L513.9 53.9L516.1 43.2L511.7 42.3"/>
<path fill="#ffaa00" d="M511.6 42.7L516.0 43.6L518.2 32.9L513.8 32.0"/>
<path fill="#ffa600" d="M513.7 32.4L518.1 33.3L520.3 22.6L515.9 21.8"/>
<path fill="#ffad00" d="M515.8 22.2L520.2 23.0L522.4 12.3L518.0 11.5"/>
<path fill="#ffe300" d="M517.9 11.9L522.3 12.7L524.5 2.1L520.1 1.2"/>
<path fill="#ff9d00" d="M513.6 53.8L517.9 54.7L520.1 44.0L515.8 43.1"/>
<path fill="#ff9d00" d="M515.7 43.5L520.1 44.4L522.3 33.7L517.9 32.9"/>
<path fill="#ffa700" d="M517.8 33.2L522.2 34.1L524.4 23.4L520.0 22.6"/>
<path fill="#ffaf00" d="M519.9 23.0L524.3 23.8L526.5 13.2L522.1 12.3"/>
<path fill="#ffda00" d="M522.0 12.7L526.4 13.5L528.6 2.9L524.2 2.0"/>
<path fill="#ffae00" d="M517.6 54.6L522.0 55.5L524.2 44.8L519.8 43.9"/>
<path fill="#ffb700" d="M519.8 44.3L524.1 45.2L526.3 34.5L522.0 33.7"/>
<path fill="#ffae00" d="M521.9 34.1L526.3 34.9L528.5 24.2L524.1 23.4"/>
<path fill="#ffab00" d="M524.0 23.8L528.4 24.6L530.6 14.0L526.2 13.1"/>
<path fill="#ffe800" d="M526.1 13.5L530.5 14.4L532.7 3.7L528.3 2.8"/>
<path fill="#ffc400" d="M521.7 55.4L526.1 56.3L528.3 45.6L523.9 44.8"/>
<path fill="#ffd000" d="M523.8 45.1L528.2 46.0L530.4 35.3L526.0 34.5"/>
<path fill="#ffca00" d="M526.0 34.9L530.3 35.7L532.5 25.1L528.2 24.2"/>
<path fill="#ffce00" d="M528.1 24.6L532.5 25.5L534.7 14.8L530.3 13.9"/>
<path fill="#faff05" d="M530.2 14.3L534.6 15.2L536.8 4.5L532.4 3.6"/>
<path fill="#ebff14" d="M525.8 56.2L530.2 57.1L532.4 46.4L528.0 45.6"/>
<path fill="#f2ff0d" d="M527.9 46.0L532.3 46.8L534.5 36.1L530.1 35.3"/>
<path fill="#f0ff0f" d="M530.0 35.7L534.4 36.5L536.6 25.9L532.2 25.0"/>
<path fill="#f9ff06" d="M532.2 25.4L536.6 26.3L538.8 15.6L534.4 14.7"/>
<path fill="#f7ff08" d="M534.3 15.1L538.7 16.0L540.9 5.3L536.5 4.4"/>
<path fill="#e2ff1d" d="M529.9 57.0L534.2 57.9L536.5 47.2L532.1 46.4"/>
<path fill="#e3ff1c" d="M532.0 46.8L536.4 47.6L538.6 37.0L534.2 36.1"/>
<path fill="#e7ff18" d="M534.1 36.5L538.5 37.4L540.7 26.7L536.3 25.8"/>
<path fill="#dbff24" d="M536.3 26.2L540.7 27.1L542.9 16.4L538.5 15.5"/>
<path fill="#daff25" d="M538.4 15.9L542.8 16.8L545.0 6.1L540.6 5.2"/>
<path fill="#99ff66" d="M533.9 57.9L538.3 58.7L540.5 48.0L536.2 47.2"/>
<path fill="#a7ff58" d="M536.1 47.6L540.5 48.4L542.7 37.8L538.3 36.9"/>
<path fill="#a5ff5a" d="M538.2 37.3L542.6 38.2L544.8 27.5L540.4 26.6"/>
<path fill="#96ff69" d="M540.4 27.0L544.7 27.9L547.0 17.2L542.6 16.3"/>
<path fill="#aaff55" d="M542.5 16.7L546.9 17.6L549.1 6.9L544.7 6.1"/>
<path fill="#62ff9d" d="M538.0 58.7L542.4 59.5L544.6 48.9L540.2 48.0"/>
<path fill="#64ff9b" d="M540.2 48.4L544.5 49.2L546.8 38.6L542.4 37.7"/>
<path fill="#66ff99" d="M542.3 38.1L546.7 39.0L548.9 28.3L544.5 27.4"/>
<path fill="#56ffa9" d="M544.4 27.8L548.8 28.7L551.0 18.0L546.7 17.1"/>
<path fill="#5fffa0" d="M546.6 17.5L551.0 18.4L553.2 7.7L548.8 6.9"/>
<path fill="#50ffaf" d="M542.1 59.5L546.5 60.3L548.7 49.7L544.3 48.8"/>
<path fill="#50ffaf" d="M544.2 49.2L548.6 50.1L550.9 39.4L546.5 38.5"/>
<path fill="#50ffaf" d="M546.4 38.9L550.8 39.8L553.0 29.1L548.6 28.2"/>
<path fill="#4affb5" d="M548.5 28.6L552.9 29.5L555.1 18.8L550.7 18.0"/>
<path fill="#52ffad" d="M550.7 18.3L555.0 19.2L557.3 8.5L552.9 7.7"/>
<path fill="#44ffbb" d="M546.2 60.3L550.6 61.1L552.8 50.5L548.4 49.6"/>
<path fill="#39ffc6" d="M548.3 50.0L552.7 50.9L554.9 40.2L550.6 39.3"/>
<path fill="#34ffcb" d="M550.5 39.7L554.9 40.6L557.1 29.9L552.7 29.0"/>
<path fill="#37ffc8" d="M552.6 29.4L557.0 30.3L559.2 19.6L554.8 18.8"/>
<path fill="#3cffc3" d="M554.7 19.2L559.1 20.0L561.3 9.4L557.0 8.5"/>
<path fill="#2dffd2" d="M550.3 61.1L554.7 62.0L556.9 51.3L552.5 50.4"/>
<path fill="#26ffd9" d="M552.4 50.8L556.8 51.7L559.0 41.0L554.6 40.1"/>
<path fill="#28ffd7" d="M554.6 40.5L558.9 41.4L561.2 30.7L556.8 29.9"/>
<path fill="#27ffd8" d="M556.7 30.2L561.1 31.1L563.3 20.4L558.9 19.6"/>
<path fill="#29ffd6" d="M558.8 20.0L563.2 20.8L565.4 10.2L561.0 9.3"/>
<path fill="#0bfff4" d="M554.4 61.9L558.8 62.8L561.0 52.1L556.6 51.2"/>
<path fill="#1fffe0" d="M556.5 51.6L560.9 52.5L563.1 41.8L558.7 40.9"/>
<path fill="#1dffe2" d="M558.6 41.3L563.0 42.2L565.2 31.5L560.9 30.7"/>
<path fill="#17ffe8" d="M560.8 31.1L565.2 31.9L567.4 21.3L563.0 20.4"/>
<path fill="#18ffe7" d="M562.9 20.8L567.3 21.6L569.5 11.0L565.1 10.1"/>
<path fill="#00d4ff" d="M558.5 62.7L562.8 63.6L565.1 52.9L560.7 52.0"/>
<path fill="#00e5ff" d="M560.6 52.4L565.0 53.3L567.2 42.6L562.8 41.8"/>
<path fill="#00d9ff" d="M562.7 42.1L567.1 43.0L569.3 32.3L564.9 31.5"/>
<path fill="#00d4ff" d="M564.9 31.9L569.3 32.7L571.5 22.1L567.1 21.2"/>
<path fill="#00d9ff" d="M567.0 21.6L571.4 22.5L573.6 11.8L569.2 10.9"/>
<path fill="#00b0ff" d="M562.5 63.5L566.9 64.4L569.1 53.7L564.8 52.8"/>
<path fill="#00bdff" d="M564.7 53.2L569.1 54.1L571.3 43.4L566.9 42.6"/>
<path fill="#00c3ff" d="M566.8 43.0L571.2 43.8L573.4 33.1L569.0 32.3"/>
<path fill="#00b7ff" d="M569.0 32.7L573.3 33.5L575.6 22.9L571.2 22.0"/>
<path fill="#00b4ff" d="M571.1 22.4L575.5 23.3L577.7 12.6L573.3 11.7"/>
<path fill="#009fff" d="M566.6 64.3L571.0 65.2L573.2 54.5L568.8 53.6"/>
<path fill="#00a1ff" d="M568.8 54.0L573.1 54.9L575.4 44.2L571.0 43.4"/>
<path fill="#009eff" d="M570.9 43.8L575.3 44.6L577.5 34.0L573.1 33.1"/>
<path fill="#009eff" d="M573.0 33.5L577.4 34.3L579.6 23.7L575.3 22.8"/>
<path fill="#0090ff" d="M575.2 23.2L579.6 24.1L581.8 13.4L577.4 12.5"/>
<path fill="#0076ff" d="M570.7 65.1L575.1 66.0L577.3 55.3L572.9 54.5"/>
<path fill="#0082ff" d="M572.8 54.8L577.2 55.7L579.5 45.0L575.1 44.2"/>
<path fill="#0077ff" d="M575.0 44.6L579.4 45.4L581.6 34.8L577.2 33.9"/>
<path fill="#007eff" d="M577.1 34.3L581.5 35.2L583.8 24.5L579.3 23.6"/>
<path fill="#0070ff" d="M579.3 24.0L583.7 24.9L585.9 14.2L581.5 13.3"/>
<path fill="#0061ff" d="M574.8 65.9L579.1 66.8L581.4 56.1L577.0 55.3"/>
<path fill="#006bff" d="M576.9 55.7L581.3 56.5L583.5 45.9L579.2 45.0"/>
<path fill="#006cff" d="M579.1 45.4L583.5 46.2L585.7 35.6L581.3 34.7"/>
<path fill="#006bff" d="M581.2 35.1L585.6 36.0L587.9 25.3L583.5 24.4"/>
<path fill="#0062ff" d="M583.4 24.8L587.8 25.7L590.0 15.0L585.6 14.2"/>
<path fill="#0065ff" d="M578.8 66.7L583.2 67.6L585.4 56.9L581.1 56.1"/>
<path fill="#0065ff" d="M581.0 56.5L585.4 57.3L587.6 46.7L583.2 45.8"/>
<path fill="#005dff" d="M583.2 46.2L587.5 47.1L589.8 36.4L585.4 35.5"/>
<path fill="#0070ff" d="M585.3 35.9L589.7 36.8L592.0 26.1L587.6 25.2"/>
<path fill="#005fff" d="M587.5 25.6L591.9 26.5L594.2 15.8L589.7 15.0"/>
<path fill="#0070ff" d="M582.9 67.5L587.2 68.4L589.5 57.7L585.2 56.9"/>
<path fill="#005aff" d="M585.1 57.3L589.4 58.1L591.7 47.5L587.3 46.6"/>
<path fill="#0065ff" d="M587.2 47.0L591.6 47.9L593.9 37.2L589.5 36.3"/>
<path fill="#006dff" d="M589.4 36.7L593.8 37.6L596.1 26.9L591.7 26.1"/>
<path fill="#0071ff" d="M591.6 26.5L596.0 27.3L598.3 16.7L593.9 15.8"/>
<path fill="#0047ff" d="M587.0 68.3L591.3 69.2L593.6 58.5L589.2 57.7"/>
<path fill="#0046ff" d="M589.1 58.1L593.5 58.9L595.8 48.3L591.4 47.4"/>
<path fill="#0058ff" d="M591.3 47.8L595.7 48.7L598.0 38.0L593.6 37.1"/>
<path fill="#0046ff" d="M593.5 37.5L597.9 38.4L600.2 27.7L595.8 26.9"/>
<path fill="#004fff" d="M595.7 27.3L600.1 28.1L602.4 17.5L598.0 16.6"/>
<path fill="#003aff" d="M591.0 69.1L595.4 70.0L597.7 59.4L593.3 58.5"/>
<path fill="#0044ff" d="M593.2 58.9L597.6 59.7L599.9 49.1L595.5 48.2"/>
<path fill="#0030ff" d="M595.4 48.6L599.8 49.5L602.1 38.8L597.7 38.0"/>
<path fill="#0041ff" d="M597.6 38.3L602.0 39.2L604.3 28.6L599.9 27.7"/>
<path fill="#0039ff" d="M599.8 28.1L604.2 29.0L606.5 18.3L602.1 17.4"/>
<path fill="#005dff" d="M597.1 70.4L601.4 71.3L603.7 60.6L599.4 59.7"/>
<path fill="#0051ff" d="M599.3 60.1L603.6 61.0L605.9 50.4L601.6 49.4"/>
<path fill="#0062ff" d="M601.5 49.8L605.9 50.8L608.2 40.1L603.8 39.2"/>
<path fill="#0058ff" d="M603.7 39.6L608.1 40.5L610.4 29.9L606.0 28.9"/>
<path fill="#004cff" d="M605.9 29.3L610.3 30.2L612.7 19.6L608.2 18.7"/>
<path fill="#0047ff" d="M601.1 71.2L605.4 72.1L607.8 61.5L603.4 60.6"/>
<path fill="#0046ff" d="M603.3 61.0L607.7 61.9L610.0 51.2L605.6 50.3"/>
<path fill="#0042ff" d="M605.6 50.7L609.9 51.6L612.3 41.0L607.9 40.1"/>
<path fill="#003eff" d="M607.8 40.4L612.2 41.4L614.5 30.7L610.1 29.8"/>
<path fill="#0043ff" d="M610.0 30.2L614.4 31.1L616.8 20.5L612.4 19.5"/>
<path fill="#005bff" d="M605.1 72.1L609.5 73.0L611.8 62.4L607.5 61.4"/>
<path fill="#0047ff" d="M607.4 61.8L611.7 62.8L614.1 52.1L609.7 51.2"/>
<path fill="#0059ff" d="M609.6 51.6L614.0 52.5L616.3 41.9L612.0 40.9"/>
<path fill="#005bff" d="M611.9 41.3L616.2 42.2L618.6 31.6L614.2 30.7"/>
<path fill="#004aff" d="M614.1 31.1L618.5 32.0L620.9 21.4L616.5 20.4"/>
<path fill="#006cff" d="M609.2 72.9L613.5 73.9L615.9 63.2L611.5 62.3"/>
<path fill="#0070ff" d="M611.4 62.7L615.8 63.6L618.1 53.0L613.8 52.0"/>
<path fill="#0062ff" d="M613.7 52.4L618.0 53.4L620.4 42.7L616.0 41.8"/>
<path fill="#0064ff" d="M615.9 42.2L620.3 43.1L622.7 32.5L618.3 31.5"/>
<path fill="#0064ff" d="M618.2 31.9L622.6 32.9L625.0 22.2L620.6 21.3"/>
<path fill="#006fff" d="M613.2 73.8L617.5 74.7L619.9 64.1L615.6 63.2"/>
<path fill="#006aff" d="M615.5 63.6L619.8 64.5L622.2 53.8L617.8 52.9"/>
<path fill="#006bff" d="M617.7 53.3L622.1 54.2L624.5 43.6L620.1 42.7"/>
<path fill="#0068ff" d="M620.0 43.1L624.4 44.0L626.8 33.4L622.4 32.4"/>
<path fill="#0062ff" d="M622.3 32.8L626.7 33.7L629.1 23.1L624.7 22.2"/>
<path fill="#0067ff" d="M617.2 74.7L621.6 75.6L624.0 65.0L619.6 64.0"/>
<path fill="#005aff" d="M619.5 64.4L623.9 65.4L626.3 54.7L621.9 53.8"/>
<path fill="#006aff" d="M621.8 54.2L626.2 55.1L628.6 44.5L624.2 43.5"/>
<path fill="#0059ff" d="M624.1 43.9L628.5 44.9L630.9 34.2L626.5 33.3"/>
<path fill="#005aff" d="M626.4 33.7L630.8 34.6L633.1 24.0L628.8 23.0"/>
<path fill="#006aff" d="M621.3 75.5L625.6 76.5L628.0 65.8L623.7 64.9"/>
<path fill="#006eff" d="M623.6 65.3L627.9 66.2L630.3 55.6L626.0 54.7"/>
<path fill="#007dff" d="M625.9 55.0L630.2 56.0L632.6 45.3L628.3 44.4"/>
<path fill="#007bff" d="M628.2 44.8L632.5 45.7L634.9 35.1L630.6 34.2"/>
<path fill="#0079ff" d="M630.5 34.6L634.8 35.5L637.2 24.8L632.8 23.9"/>
<path fill="#0087ff" d="M625.3 76.4L629.7 77.3L632.1 66.7L627.7 65.8"/>
<path fill="#0088ff" d="M627.6 66.2L632.0 67.1L634.4 56.5L630.0 55.5"/>
<path fill="#007eff" d="M629.9 55.9L634.3 56.8L636.7 46.2L632.3 45.3"/>
<path fill="#0082ff" d="M632.2 45.7L636.6 46.6L639.0 36.0L634.6 35.0"/>
<path fill="#0072ff" d="M634.5 35.4L638.9 36.4L641.3 25.7L636.9 24.8"/>
<path fill="#0086ff" d="M629.4 77.3L633.7 78.2L636.1 67.6L631.8 66.6"/>
<path fill="#008eff" d="M631.7 67.0L636.0 68.0L638.4 57.3L634.1 56.4"/>
<path fill="#008bff" d="M634.0 56.8L638.3 57.7L640.7 47.1L636.4 46.1"/>
<path fill="#0082ff" d="M636.3 46.5L640.6 47.5L643.0 36.8L638.7 35.9"/>
<path fill="#007dff" d="M638.6 36.3L642.9 37.2L645.3 26.6L641.0 25.7"/>
<path fill="#008cff" d="M633.4 78.1L637.8 79.1L640.2 68.4L635.8 67.5"/>
<path fill="#0094ff" d="M635.7 67.9L640.1 68.8L642.5 58.2L638.1 57.3"/>
<path fill="#0091ff" d="M638.0 57.6L642.4 58.6L644.8 47.9L640.4 47.0"/>
<path fill="#0090ff" d="M640.3 47.4L644.7 48.3L647.1 37.7L642.7 36.8"/>
<path fill="#009bff" d="M642.6 37.2L647.0 38.1L649.4 27.5L645.0 26.5"/>
<path fill="#00a1ff" d="M637.5 79.0L641.9 79.9L644.3 69.3L639.9 68.4"/>
<path fill="#00abff" d="M639.8 68.8L644.2 69.7L646.6 59.1L642.2 58.1"/>
<path fill="#00a2ff" d="M642.1 58.5L646.5 59.4L648.9 48.8L644.5 47.9"/>
<path fill="#00a8ff" d="M644.4 48.3L648.8 49.2L651.2 38.6L646.8 37.6"/>
<path fill="#00a4ff" d="M646.7 38.0L651.1 39.0L653.5 28.3L649.1 27.4"/>
<path fill="#009bff" d="M641.6 79.9L645.9 80.8L648.3 70.2L644.0 69.2"/>
<path fill="#009cff" d="M643.9 69.6L648.2 70.6L650.6 59.9L646.3 59.0"/>
<path fill="#00aeff" d="M646.2 59.4L650.5 60.3L652.9 49.7L648.6 48.7"/>
<path fill="#00a4ff" d="M648.5 49.1L652.8 50.1L655.2 39.4L650.9 38.5"/>
<path fill="#009dff" d="M650.8 38.9L655.1 39.8L657.5 29.2L653.2 28.3"/>
<path fill="#00c9ff" d="M645.6 80.7L650.0 81.7L652.4 71.0L648.0 70.1"/>
<path fill="#00bcff" d="M647.9 70.5L652.3 71.4L654.7 60.8L650.3 59.9"/>
<path fill="#00b4ff" d="M650.2 60.2L654.6 61.2L657.0 50.5L652.6 49.6"/>
<path fill="#00b6ff" d="M652.5 50.0L656.9 50.9L659.3 40.3L654.9 39.4"/>
<path fill="#00b3ff" d="M654.8 39.8L659.2 40.7L661.6 30.1L657.2 29.1"/>
<path fill="#00a7ff" d="M649.7 81.6L654.1 82.5L656.4 71.9L652.1 71.0"/>
<path fill="#00aaff" d="M652.0 71.4L656.4 72.3L658.7 61.7L654.4 60.7"/>
<path fill="#00abff" d="M654.3 61.1L658.6 62.0L661.0 51.4L656.7 50.5"/>
<path fill="#00b2ff" d="M656.6 50.9L660.9 51.8L663.3 41.2L659.0 40.2"/>
<path fill="#00baff" d="M658.9 40.6L663.2 41.6L665.6 30.9L661.3 30.0"/>
<path fill="#00baff" d="M653.8 82.5L658.1 83.4L660.5 72.8L656.1 71.8"/>
<path fill="#00baff" d="M656.1 72.2L660.4 73.2L662.8 62.5L658.4 61.6"/>
<path fill="#00bdff" d="M658.4 62.0L662.7 62.9L665.1 52.3L660.7 51.4"/>
<path fill="#00b9ff" d="M660.6 51.7L665.0 52.7L667.4 42.0L663.0 41.1"/>
<path fill="#00b8ff" d="M662.9 41.5L667.3 42.4L669.7 31.8L665.3 30.9"/>
<path fill="#00a7ff" d="M657.8 83.3L662.1 84.3L664.5 73.6L660.2 72.7"/>
<path fill="#00b8ff" d="M660.1 73.1L664.4 74.0L666.9 63.4L662.5 62.5"/>
<path fill="#00a3ff" d="M662.4 62.9L666.8 63.8L669.2 53.2L664.8 52.2"/>
<path fill="#00acff" d="M664.7 52.6L669.1 53.5L671.5 42.9L667.1 42.0"/>
<path fill="#00b0ff" d="M667.0 42.4L671.4 43.3L673.8 32.7L669.4 31.7"/>
<path fill="#00baff" d="M661.8 84.2L666.1 85.1L668.5 74.5L664.2 73.6"/>
<path fill="#00bcff" d="M664.2 74.0L668.5 74.9L670.9 64.3L666.6 63.3"/>
<path fill="#00bbff" d="M666.5 63.7L670.8 64.7L673.3 54.0L668.9 53.1"/>
<path fill="#00bfff" d="M668.8 53.5L673.2 54.4L675.7 43.8L671.2 42.9"/>
<path fill="#00c0ff" d="M671.1 43.2L675.6 44.2L678.1 33.6L673.5 32.6"/>
<path fill="#00cdff" d="M665.8 85.0L670.0 85.9L672.5 75.3L668.2 74.4"/>
<path fill="#00ceff" d="M668.2 74.8L672.5 75.7L675.0 65.1L670.6 64.2"/>
<path fill="#00b9ff" d="M670.5 64.6L674.9 65.5L677.4 54.9L673.0 54.0"/>
<path fill="#00b9ff" d="M672.9 54.4L677.3 55.3L679.9 44.7L675.4 43.7"/>
<path fill="#00caff" d="M675.3 44.1L679.8 45.1L682.3 34.5L677.8 33.5"/>
<path fill="#00c4ff" d="M669.7 85.9L674.0 86.8L676.6 76.2L672.3 75.3"/>
<path fill="#00c7ff" d="M672.2 75.7L676.5 76.6L679.0 66.0L674.7 65.1"/>
<path fill="#00b8ff" d="M674.6 65.5L679.0 66.4L681.5 55.8L677.1 54.9"/>
<path fill="#00c2ff" d="M677.0 55.2L681.4 56.2L684.0 45.6L679.6 44.6"/>
<path fill="#00cfff" d="M679.5 45.0L683.9 46.0L686.5 35.4L682.0 34.4"/>
<path fill="#00cdff" d="M673.7 86.7L677.9 87.6L680.6 77.1L676.3 76.1"/>
<path fill="#00d0ff" d="M676.2 76.5L680.5 77.4L683.1 66.9L678.7 65.9"/>
<path fill="#00beff" d="M678.7 66.3L683.0 67.3L685.7 56.7L681.2 55.7"/>
<path fill="#00bbff" d="M681.1 56.1L685.6 57.1L688.2 46.5L683.7 45.5"/>
<path fill="#00bcff" d="M683.6 45.9L688.1 46.9L690.8 36.3L686.2 35.3"/>
<path fill="#00c2ff" d="M677.6 87.6L681.9 88.5L684.6 77.9L680.3 77.0"/>
<path fill="#00c9ff" d="M680.2 77.4L684.5 78.3L687.2 67.7L682.8 66.8"/>
<path fill="#00c3ff" d="M682.7 67.2L687.1 68.1L689.8 57.6L685.4 56.6"/>
<path fill="#00c2ff" d="M685.3 57.0L689.7 58.0L692.4 47.4L687.9 46.4"/>
<path fill="#00c4ff" d="M687.8 46.8L692.3 47.8L695.0 37.2L690.5 36.2"/>
<path fill="#00bfff" d="M681.6 88.4L685.8 89.4L688.6 78.8L684.3 77.8"/>
<path fill="#00b2ff" d="M684.2 78.2L688.5 79.2L691.2 68.7L686.9 67.7"/>
<path fill="#00c5ff" d="M686.8 68.1L691.1 69.1L693.9 58.5L689.5 57.5"/>
<path fill="#00b7ff" d="M689.4 57.9L693.8 58.9L696.6 48.4L692.1 47.3"/>
<path fill="#00c8ff" d="M692.0 47.7L696.5 48.8L699.2 38.2L694.7 37.2"/>
<path fill="#00bfff" d="M685.5 89.3L689.8 90.5L692.6 80.0L688.3 78.8"/>
<path fill="#00baff" d="M688.2 79.1L692.5 80.4L695.3 69.8L690.9 68.6"/>
<path fill="#00bdff" d="M690.8 69.0L695.2 70.2L698.0 59.7L693.6 58.4"/>
<path fill="#00c7ff" d="M693.5 58.8L697.9 60.1L700.7 49.5L696.3 48.3"/>
<path fill="#00c8ff" d="M696.2 48.7L700.6 49.9L703.4 39.4L698.9 38.1"/>
<path fill="#00adff" d="M689.5 90.4L693.8 91.6L696.6 81.1L692.3 79.9"/>
<path fill="#00b8ff" d="M692.2 80.3L696.5 81.5L699.4 71.0L695.0 69.7"/>
<path fill="#00baff" d="M694.9 70.1L699.3 71.4L702.1 60.9L697.7 59.6"/>
<path fill="#00b5ff" d="M697.6 60.0L702.0 61.2L704.9 50.7L700.4 49.5"/>
<path fill="#00b1ff" d="M700.3 49.8L704.8 51.1L707.6 40.6L703.1 39.3"/>
<path fill="#00b9ff" d="M693.5 91.6L697.7 92.8L700.6 82.3L696.3 81.0"/>
<path fill="#00c0ff" d="M696.2 81.4L700.5 82.6L703.4 72.1L699.1 70.9"/>
<path fill="#00c4ff" d="M699.0 71.3L703.3 72.5L706.2 62.0L701.8 60.8"/>
<path fill="#00d0ff" d="M701.7 61.2L706.1 62.4L709.0 51.9L704.6 50.6"/>
<path fill="#00c9ff" d="M704.5 51.0L708.9 52.3L711.8 41.8L707.3 40.5"/>
<path fill="#00cdff" d="M697.4 92.7L701.7 93.9L704.7 83.4L700.3 82.2"/>
<path fill="#00c7ff" d="M700.2 82.6L704.5 83.8L707.5 73.3L703.1 72.0"/>
<path fill="#00c7ff" d="M703.0 72.4L707.4 73.7L710.3 63.2L705.9 61.9"/>
<path fill="#00d8ff" d="M705.8 62.3L710.2 63.6L713.2 53.1L708.7 51.8"/>
<path fill="#00d2ff" d="M708.6 52.2L713.1 53.4L716.0 43.0L711.5 41.7"/>
<path fill="#00b5ff" d="M701.4 93.8L705.7 95.0L708.7 84.5L704.4 83.3"/>
<path fill="#00c0ff" d="M704.2 83.7L708.6 84.9L711.5 74.4L707.2 73.2"/>
<path fill="#00c5ff" d="M707.1 73.6L711.4 74.8L714.4 64.3L710.0 63.1"/>
<path fill="#00beff" d="M709.9 63.5L714.3 64.7L717.3 54.2L712.9 53.0"/>
<path fill="#00baff" d="M712.7 53.4L717.2 54.6L720.2 44.1L715.7 42.9"/>
<path fill="#00d5ff" d="M705.4 94.9L709.7 96.1L712.7 85.7L708.4 84.4"/>
<path fill="#00c4ff" d="M708.3 84.8L712.6 86.1L715.6 75.6L711.2 74.3"/>
<path fill="#00bfff" d="M711.1 74.7L715.5 76.0L718.5 65.5L714.1 64.2"/>
<path fill="#00c7ff" d="M714.0 64.6L718.4 65.9L721.4 55.4L717.0 54.2"/>
<path fill="#00c9ff" d="M716.9 54.5L721.3 55.8L724.4 45.3L719.9 44.1"/>
<path fill="#00eeff" d="M712.0 96.8L716.3 97.9L719.3 87.4L715.0 86.3"/>
<path fill="#00fcff" d="M714.9 86.7L719.2 87.8L722.2 77.3L717.9 76.2"/>
<path fill="#00fbff" d="M717.8 76.6L722.0 77.7L725.0 67.2L720.8 66.1"/>
<path fill="#00f5ff" d="M720.7 66.5L724.9 67.6L727.9 57.2L723.7 56.0"/>
<path fill="#00eeff" d="M723.6 56.4L727.8 57.5L730.8 47.1L726.6 45.9"/>
<path fill="#00f9ff" d="M716.0 97.8L720.2 99.0L723.2 88.5L719.0 87.4"/>
<path fill="#06fff9" d="M718.9 87.7L723.1 88.9L726.1 78.4L721.9 77.3"/>
<path fill="#00f7ff" d="M721.7 77.6L726.0 78.8L729.0 68.3L724.7 67.2"/>
<path fill="#00f7ff" d="M724.6 67.6L728.9 68.7L731.9 58.2L727.6 57.1"/>
<path fill="#05fffa" d="M727.5 57.5L731.7 58.6L734.7 48.1L730.5 47.0"/>
<path fill="#00c6ff" d="M719.9 98.9L724.2 100.0L727.2 89.5L722.9 88.4"/>
<path fill="#00bbff" d="M722.8 88.8L727.1 89.9L730.0 79.4L725.8 78.3"/>
<path fill="#00e7ff" d="M725.7 78.7L729.9 79.8L732.9 69.3L728.7 68.2"/>
<path fill="#00e8ff" d="M728.6 68.6L732.8 69.7L735.8 59.2L731.6 58.1"/>
<path fill="#00ecff" d="M731.4 58.5L735.7 59.6L738.6 49.1L734.4 48.0"/>
<path fill="#00d1ff" d="M723.9 99.9L728.2 101.1L731.1 90.6L726.9 89.5"/>
<path fill="#00bdff" d="M726.8 89.8L731.0 91.0L734.0 80.5L729.7 79.4"/>
<path fill="#00f6ff" d="M729.6 79.7L733.9 80.9L736.8 70.4L732.6 69.3"/>
<path fill="#00f2ff" d="M732.5 69.6L736.7 70.8L739.7 60.3L735.5 59.2"/>
<path fill="#06fff9" d="M735.4 59.5L739.6 60.7L742.5 50.2L738.3 49.1"/>
<path fill="#00b0ff" d="M727.9 101.0L732.1 102.1L735.1 91.7L730.8 90.5"/>
<path fill="#00b0ff" d="M730.7 90.9L735.0 92.0L737.9 81.5L733.7 80.4"/>
<path fill="#00ebff" d="M733.6 80.8L737.8 81.9L740.8 71.4L736.5 70.3"/>
<path fill="#00f7ff" d="M736.4 70.7L740.7 71.8L743.6 61.3L739.4 60.2"/>
<path fill="#00f7ff" d="M739.3 60.6L743.5 61.7L746.4 51.2L742.2 50.1"/>
<path fill="#00d7ff" d="M731.8 102.1L736.1 103.2L739.0 92.7L734.8 91.6"/>
<path fill="#00d5ff" d="M734.7 92.0L738.9 93.1L741.9 82.6L737.6 81.5"/>
<path fill="#00f9ff" d="M737.5 81.8L741.8 83.0L744.7 72.5L740.5 71.4"/>
<path fill="#00f6ff" d="M740.4 71.7L744.6 72.9L747.5 62.4L743.3 61.2"/>
<path fill="#09fff6" d="M743.2 61.6L747.4 62.8L750.3 52.3L746.1 51.1"/>
<path fill="#00c1ff" d="M735.8 103.1L740.0 104.3L743.0 93.8L738.7 92.6"/>
<path fill="#00d0ff" d="M738.6 93.0L742.9 94.1L745.8 83.6L741.6 82.5"/>
<path fill="#00fcff" d="M741.5 82.9L745.7 84.0L748.6 73.5L744.4 72.4"/>
<path fill="#00fcff" d="M744.3 72.8L748.5 73.9L751.5 63.4L747.2 62.3"/>
<path fill="#00fbff" d="M747.1 62.7L751.4 63.8L754.3 53.3L750.1 52.2"/>
<path fill="#00c4ff" d="M739.7 104.2L744.0 105.3L746.9 94.8L742.7 93.7"/>
<path fill="#00cbff" d="M742.6 94.1L746.8 95.2L749.8 84.7L745.5 83.6"/>
<path fill="#00ffff" d="M745.4 83.9L749.6 85.1L752.6 74.6L748.3 73.5"/>
<path fill="#0ffff0" d="M748.2 73.8L752.5 75.0L755.4 64.5L751.2 63.3"/>
<path fill="#00faff" d="M751.1 63.7L755.3 64.9L758.2 54.4L754.0 53.2"/>
<path fill="#00f7ff" d="M743.7 105.2L747.9 106.4L750.9 95.9L746.6 94.7"/>
<path fill="#00fbff" d="M746.5 95.1L750.8 96.2L753.7 85.7L749.5 84.6"/>
<path fill="#3affc5" d="M749.3 85.0L753.6 86.1L756.5 75.6L752.3 74.5"/>
<path fill="#3affc5" d="M752.2 74.9L756.4 76.0L759.3 65.5L755.1 64.4"/>
<path fill="#31ffce" d="M755.0 64.8L759.2 65.9L762.2 55.4L757.9 54.3"/>
<path fill="#03fffc" d="M747.6 106.3L751.9 107.4L754.8 96.9L750.6 95.8"/>
<path fill="#01fffe" d="M750.5 96.2L754.7 97.3L757.6 86.8L753.4 85.7"/>
<path fill="#41ffbe" d="M753.3 86.0L757.5 87.2L760.5 76.7L756.2 75.5"/>
<path fill="#2fffd0" d="M756.1 75.9L760.3 77.1L763.3 66.6L759.0 65.4"/>
<path fill="#33ffcc" d="M758.9 65.8L763.2 66.9L766.1 56.4L761.9 55.3"/>
<path fill="#4effb1" d="M751.6 107.3L755.9 108.5L758.8 98.0L754.5 96.8"/>
<path fill="#57ffa8" d="M754.4 97.2L758.7 98.3L761.6 87.8L757.3 86.7"/>
<path fill="#61ff9e" d="M757.2 87.1L761.5 88.2L764.4 77.7L760.2 76.6"/>
<path fill="#60ff9f" d="M760.0 77.0L764.3 78.1L767.2 67.6L763.0 66.5"/>
<path fill="#4effb1" d="M762.9 66.9L767.1 68.0L770.0 57.5L765.8 56.4"/>
<path fill="#3effc1" d="M755.6 108.4L759.8 109.5L762.7 99.0L758.5 97.9"/>
<path fill="#53ffac" d="M758.4 98.3L762.6 99.4L765.5 88.9L761.3 87.8"/>
<path fill="#43ffbc" d="M761.2 88.1L765.4 89.3L768.3 78.8L764.1 77.6"/>
<path fill="#4fffb0" d="M764.0 78.0L768.2 79.2L771.1 68.7L766.9 67.5"/>
<path fill="#53ffac" d="M766.8 67.9L771.0 69.0L773.9 58.5L769.7 57.4"/>
<path fill="#50ffaf" d="M759.5 109.4L763.8 110.6L766.7 100.1L762.4 98.9"/>
<path fill="#61ff9e" d="M762.3 99.3L766.6 100.5L769.5 89.9L765.2 88.8"/>
<path fill="#58ffa7" d="M765.1 89.2L769.4 90.3L772.3 79.8L768.0 78.7"/>
<path fill="#50ffaf" d="M767.9 79.1L772.2 80.2L775.1 69.7L770.8 68.6"/>
<path fill="#5bffa4" d="M770.7 69.0L775.0 70.1L777.9 59.6L773.6 58.5"/>
<path fill="#55ffaa" d="M763.5 110.5L767.7 111.6L770.6 101.1L766.4 100.0"/>
<path fill="#4effb1" d="M766.3 100.4L770.5 101.5L773.4 91.0L769.2 89.9"/>
<path fill="#60ff9f" d="M769.1 90.2L773.3 91.4L776.2 80.9L772.0 79.7"/>
<path fill="#64ff9b" d="M771.9 80.1L776.1 81.3L779.0 70.8L774.8 69.6"/>
<path fill="#5dffa2" d="M774.7 70.0L778.9 71.1L781.8 60.6L777.6 59.5"/>
<path fill="#bfff40" d="M774.4 113.4L778.7 114.5L781.6 104.0L777.3 102.9"/>
<path fill="#c4ff3b" d="M777.2 103.2L781.5 104.4L784.4 93.8L780.1 92.7"/>
<path fill="#caff35" d="M780.0 93.1L784.3 94.2L787.2 83.7L782.9 82.6"/>
<path fill="#d6ff29" d="M782.8 83.0L787.1 84.1L790.0 73.6L785.7 72.5"/>
<path fill="#d6ff29" d="M785.6 72.9L789.9 74.0L792.7 63.5L788.5 62.4"/>
<path fill="#beff41" d="M778.4 114.4L782.8 115.5L785.6 105.0L781.3 103.9"/>
<path fill="#c2ff3d" d="M781.2 104.3L785.5 105.4L788.4 94.9L784.1 93.8"/>
<path fill="#c4ff3b" d="M784.0 94.2L788.3 95.3L791.2 84.8L786.9 83.6"/>
<path fill="#ceff31" d="M786.8 84.0L791.1 85.1L793.9 74.6L789.7 73.5"/>
<path fill="#bcff43" d="M789.6 73.9L793.8 75.0L796.7 64.5L792.4 63.4"/>
<path fill="#daff25" d="M782.5 115.4L786.8 116.6L789.6 106.0L785.3 104.9"/>
<path fill="#dcff23" d="M785.2 105.3L789.5 106.4L792.4 95.9L788.1 94.8"/>
<path fill="#dbff24" d="M788.0 95.2L792.3 96.3L795.2 85.8L790.9 84.7"/>
<path fill="#d7ff28" d="M790.8 85.1L795.1 86.2L797.9 75.7L793.6 74.5"/>
<path fill="#d0ff2f" d="M793.5 74.9L797.8 76.0L800.7 65.5L796.4 64.4"/>
<path fill="#cbff34" d="M786.5 116.5L790.8 117.6L793.6 107.1L789.3 106.0"/>
<path fill="#d6ff29" d="M789.2 106.4L793.5 107.5L796.4 97.0L792.1 95.8"/>
<path fill="#c5ff3a" d="M792.0 96.2L796.3 97.3L799.2 86.8L794.9 85.7"/>
<path fill="#c7ff38" d="M794.8 86.1L799.1 87.2L801.9 76.7L797.6 75.6"/>
<path fill="#d5ff2a" d="M797.5 76.0L801.8 77.1L804.7 66.6L800.4 65.5"/>
<path fill="#97ff68" d="M792.1 117.9L796.4 119.0L799.2 108.5L794.9 107.4"/>
<path fill="#96ff69" d="M794.8 107.8L799.1 108.9L802.0 98.4L797.7 97.3"/>
<path fill="#a3ff5c" d="M797.6 97.7L801.9 98.8L804.7 88.3L800.5 87.2"/>
<path fill="#9dff62" d="M800.4 87.5L804.6 88.6L807.5 78.1L803.2 77.0"/>
<path fill="#adff52" d="M803.1 77.4L807.4 78.5L810.2 68.0L806.0 66.9"/>
<path fill="#bcff43" d="M796.1 119.0L800.3 120.1L803.2 109.6L798.9 108.4"/>
<path fill="#aaff55" d="M798.8 108.8L803.1 109.9L806.0 99.4L801.7 98.3"/>
<path fill="#a6ff59" d="M801.6 98.7L805.8 99.8L808.7 89.3L804.4 88.2"/>
<path fill="#a6ff59" d="M804.3 88.6L808.6 89.7L811.5 79.2L807.2 78.1"/>
<path fill="#b0ff4f" d="M807.1 78.4L811.4 79.5L814.2 69.0L809.9 67.9"/>
<path fill="#e6ff19" d="M800.0 120.0L804.3 121.1L807.2 110.6L802.9 109.5"/>
<path fill="#fff500" d="M802.8 109.9L807.1 111.0L809.9 100.5L805.7 99.3"/>
<path fill="#a8ff57" d="M805.5 99.7L809.8 100.8L812.7 90.3L808.4 89.2"/>
<path fill="#adff52" d="M808.3 89.6L812.6 90.7L815.4 80.2L811.2 79.1"/>
<path fill="#afff50" d="M811.1 79.5L815.3 80.6L818.2 70.1L813.9 68.9"/>
<path fill="#f0ff0f" d="M804.0 121.0L808.3 122.1L811.1 111.6L806.9 110.5"/>
<path fill="#fff500" d="M806.8 110.9L811.0 112.0L813.9 101.5L809.6 100.4"/>
<path fill="#a1ff5e" d="M809.5 100.8L813.8 101.9L816.7 91.3L812.4 90.2"/>
<path fill="#b2ff4d" d="M812.3 90.6L816.6 91.7L819.4 81.2L815.1 80.1"/>
<path fill="#a5ff5a" d="M815.0 80.5L819.3 81.6L822.2 71.1L817.9 70.0"/>
<path fill="#deff21" d="M808.0 122.1L812.3 123.2L815.1 112.6L810.8 111.5"/>
<path fill="#fff500" d="M810.7 111.9L815.0 113.0L817.9 102.5L813.6 101.4"/>
<path fill="#9dff62" d="M813.5 101.8L817.8 102.9L820.6 92.4L816.4 91.3"/>
<path fill="#9eff61" d="M816.3 91.7L820.5 92.8L823.4 82.2L819.1 81.1"/>
<path fill="#9eff61" d="M819.0 81.5L823.3 82.6L826.1 72.1L821.9 71.0"/>
<path fill="#e0ff1f" d="M812.0 123.1L816.2 124.2L819.1 113.7L814.8 112.6"/>
<path fill="#fff500" d="M814.7 113.0L819.0 114.1L821.8 103.5L817.6 102.4"/>
<path fill="#95ff6a" d="M817.5 102.8L821.7 103.9L824.6 93.4L820.3 92.3"/>
<path fill="#96ff69" d="M820.2 92.7L824.5 93.8L827.4 83.3L823.1 82.2"/>
<path fill="#a5ff5a" d="M823.0 82.6L827.3 83.7L830.1 73.1L825.8 72.0"/>
<path fill="#d7ff28" d="M815.9 124.1L820.2 125.2L823.1 114.7L818.8 113.6"/>
<path fill="#a8ff57" d="M818.7 114.0L823.0 115.1L825.8 104.6L821.5 103.5"/>
<path fill="#a4ff5b" d="M821.4 103.8L825.7 105.0L828.6 94.4L824.3 93.3"/>
<path fill="#acff53" d="M824.2 93.7L828.5 94.8L831.3 84.3L827.1 83.2"/>
<path fill="#97ff68" d="M827.0 83.6L831.2 84.7L834.1 74.2L829.8 73.1"/>
<path fill="#a6ff59" d="M819.9 125.1L824.2 126.2L827.0 115.7L822.8 114.6"/>
<path fill="#a7ff58" d="M822.7 115.0L826.9 116.1L829.8 105.6L825.5 104.5"/>
<path fill="#a8ff57" d="M825.4 104.9L829.7 106.0L832.6 95.5L828.3 94.4"/>
<path fill="#93ff6c" d="M828.2 94.7L832.4 95.9L835.3 85.3L831.0 84.2"/>
<path fill="#99ff66" d="M830.9 84.6L835.2 85.7L838.1 75.2L833.8 74.1"/>
<path fill="#8dff72" d="M823.9 126.2L828.2 127.3L831.0 116.8L826.7 115.7"/>
<path fill="#a0ff5f" d="M826.6 116.0L830.9 117.1L833.8 106.6L829.5 105.5"/>
<path fill="#97ff68" d="M829.4 105.9L833.7 107.0L836.5 96.5L832.3 95.4"/>
<path fill="#9fff60" d="M832.1 95.8L836.4 96.9L839.3 86.4L835.0 85.3"/>
<path fill="#92ff6d" d="M834.9 85.6L839.2 86.7L842.0 76.2L837.8 75.1"/>
<path fill="#a6ff59" d="M827.9 127.2L832.1 128.3L835.0 117.8L830.7 116.7"/>
<path fill="#a1ff5e" d="M830.6 117.1L834.9 118.2L837.7 107.7L833.5 106.5"/>
<path fill="#aeff51" d="M833.4 106.9L837.6 108.0L840.5 97.5L836.2 96.4"/>
<path fill="#b2ff4d" d="M836.1 96.8L840.4 97.9L843.3 87.4L839.0 86.3"/>
<path fill="#9dff62" d="M838.9 86.7L843.1 87.8L846.0 77.3L841.7 76.2"/>
<path fill="#a3ff5c" d="M831.8 128.2L836.1 129.3L839.0 118.8L834.7 117.7"/>
<path fill="#9aff65" d="M834.6 118.1L838.9 119.2L841.7 108.7L837.4 107.6"/>
<path fill="#9dff62" d="M837.3 108.0L841.6 109.1L844.5 98.6L840.2 97.4"/>
<path fill="#98ff67" d="M840.1 97.8L844.4 98.9L847.2 88.4L843.0 87.3"/>
<path fill="#99ff66" d="M842.8 87.7L847.1 88.8L850.0 78.3L845.7 77.2"/>
<path fill="#9bff64" d="M835.8 129.3L840.1 130.4L842.9 119.8L838.7 118.7"/>
<path fill="#9cff63" d="M838.6 119.1L842.8 120.2L845.7 109.7L841.4 108.6"/>
<path fill="#91ff6e" d="M841.3 109.0L845.6 110.1L848.4 99.6L844.2 98.5"/>
<path fill="#8cff73" d="M844.1 98.9L848.3 100.0L851.2 89.4L846.9 88.3"/>
<path fill="#94ff6b" d="M846.8 88.7L851.1 89.8L854.0 79.3L849.7 78.2"/>
<path fill="#9bff64" d="M839.8 130.3L844.1 131.4L846.9 120.9L842.6 119.8"/>
<path fill="#9eff61" d="M842.5 120.2L846.8 121.3L849.7 110.7L845.4 109.6"/>
<path fill="#9bff64" d="M845.3 110.0L849.6 111.1L852.4 100.6L848.1 99.5"/>
<path fill="#aaff55" d="M848.0 99.9L852.3 101.0L855.2 90.5L850.9 89.4"/>
<path fill="#a4ff5b" d="M850.8 89.8L855.1 90.9L857.9 80.3L853.7 79.2"/>
<path fill="#8aff75" d="M843.8 131.3L848.0 132.4L850.9 121.9L846.6 120.8"/>
<path fill="#91ff6e" d="M846.5 121.2L850.8 122.3L853.6 111.8L849.4 110.7"/>
<path fill="#95ff6a" d="M849.3 111.0L853.5 112.2L856.4 101.6L852.1 100.5"/>
<path fill="#97ff68" d="M852.0 100.9L856.3 102.0L859.1 91.5L854.9 90.4"/>
<path fill="#89ff76" d="M854.8 90.8L859.0 91.9L861.9 81.4L857.6 80.3"/>
<path fill="#87ff78" d="M847.7 132.3L852.0 133.4L854.9 122.9L850.6 121.8"/>
<path fill="#80ff7f" d="M850.5 122.2L854.8 123.3L857.6 112.8L853.3 111.7"/>
<path fill="#7dff82" d="M853.2 112.1L857.5 113.2L860.4 102.7L856.1 101.6"/>
<path fill="#7dff82" d="M856.0 101.9L860.3 103.1L863.1 92.5L858.8 91.4"/>
<path fill="#8dff72" d="M858.7 91.8L863.0 92.9L865.9 82.4L861.6 81.3"/>
<path fill="#6fff90" d="M851.7 133.4L856.0 134.5L858.8 124.0L854.6 122.9"/>
<path fill="#6aff95" d="M854.5 123.2L858.7 124.3L861.6 113.8L857.3 112.7"/>
<path fill="#6cff93" d="M857.2 113.1L861.5 114.2L864.3 103.7L860.1 102.6"/>
<path fill="#77ff88" d="M860.0 103.0L864.2 104.1L867.1 93.6L862.8 92.5"/>
<path fill="#7aff85" d="M862.7 92.8L867.0 93.9L869.9 83.4L865.6 82.3"/>
<path fill="#50ffaf" d="M855.7 134.4L859.9 135.5L862.8 125.0L858.5 123.9"/>
<path fill="#5dffa2" d="M858.4 124.3L862.7 125.4L865.6 114.9L861.3 113.7"/>
<path fill="#50ffaf" d="M861.2 114.1L865.5 115.2L868.3 104.7L864.0 103.6"/>
<path fill="#4bffb4" d="M863.9 104.0L868.2 105.1L871.1 94.6L866.8 93.5"/>
<path fill="#61ff9e" d="M866.7 93.9L871.0 95.0L873.8 84.5L869.6 83.4"/>
<path fill="#59ffa6" d="M859.6 135.4L863.9 136.5L866.8 126.0L862.5 124.9"/>
<path fill="#4fffb0" d="M862.4 125.3L866.7 126.4L869.5 115.9L865.3 114.8"/>
<path fill="#5affa5" d="M865.2 115.2L869.4 116.3L872.3 105.8L868.0 104.6"/>
<path fill="#50ffaf" d="M867.9 105.0L872.2 106.1L875.1 95.6L870.8 94.5"/>
<path fill="#49ffb6" d="M870.7 94.9L875.0 96.0L877.9 85.5L873.5 84.4"/>
<path fill="#43ffbc" d="M863.6 136.4L867.8 137.5L870.7 127.0L866.5 125.9"/>
<path fill="#45ffba" d="M866.4 126.3L870.6 127.4L873.5 116.9L869.2 115.8"/>
<path fill="#4cffb3" d="M869.1 116.2L873.4 117.3L876.3 106.8L872.0 105.7"/>
<path fill="#38ffc7" d="M871.9 106.1L876.2 107.2L879.1 96.7L874.8 95.6"/>
<path fill="#45ffba" d="M874.7 95.9L879.0 97.1L881.9 86.5L877.5 85.4"/>
<path fill="#46ffb9" d="M867.5 137.5L871.8 138.6L874.7 128.1L870.4 127.0"/>
<path fill="#3dffc2" d="M870.3 127.3L874.6 128.4L877.5 117.9L873.2 116.8"/>
<path fill="#40ffbf" d="M873.1 117.2L877.4 118.3L880.3 107.8L876.0 106.7"/>
<path fill="#46ffb9" d="M875.9 107.1L880.2 108.2L883.1 97.7L878.8 96.6"/>
<path fill="#50ffaf" d="M878.7 97.0L883.0 98.1L885.9 87.6L881.6 86.5"/>
<path fill="#3affc5" d="M871.5 138.5L875.7 139.6L878.6 129.1L874.4 128.0"/>
<path fill="#42ffbd" d="M874.3 128.4L878.5 129.5L881.5 119.0L877.2 117.9"/>
<path fill="#46ffb9" d="M877.1 118.3L881.4 119.4L884.3 108.9L880.0 107.7"/>
<path fill="#33ffcc" d="M879.9 108.1L884.2 109.2L887.1 98.7L882.8 97.6"/>
<path fill="#31ffce" d="M882.7 98.0L887.0 99.1L889.9 88.6L885.6 87.5"/>
<path fill="#56ffa9" d="M875.4 139.5L879.6 140.6L882.6 130.1L878.3 129.0"/>
<path fill="#4affb5" d="M878.2 129.4L882.5 130.5L885.4 120.0L881.2 118.9"/>
<path fill="#3fffc0" d="M881.1 119.3L885.3 120.4L888.3 109.9L884.0 108.8"/>
<path fill="#54ffab" d="M883.9 109.2L888.2 110.3L891.1 99.8L886.8 98.7"/>
<path fill="#47ffb8" d="M886.7 99.1L891.0 100.2L894.0 89.7L889.6 88.6"/>
<path fill="#47ffb8" d="M879.3 140.5L883.6 141.6L886.5 131.1L882.3 130.0"/>
<path fill="#4cffb3" d="M882.2 130.4L886.4 131.5L889.4 121.0L885.1 119.9"/>
<path fill="#3cffc3" d="M885.0 120.3L889.3 121.4L892.3 110.9L888.0 109.8"/>
<path fill="#4bffb4" d="M887.9 110.2L892.2 111.3L895.1 100.8L890.8 99.7"/>
<path fill="#3dffc2" d="M890.7 100.1L895.0 101.2L898.0 90.7L893.7 89.6"/>
<path fill="#37ffc8" d="M886.3 142.3L890.4 143.5L893.4 133.0L889.2 131.9"/>
<path fill="#36ffc9" d="M889.1 132.2L893.2 133.4L896.3 122.9L892.1 121.8"/>
<path fill="#27ffd8" d="M892.0 122.2L896.1 123.3L899.1 112.8L895.0 111.7"/>
<path fill="#27ffd8" d="M894.9 112.1L899.0 113.2L902.0 102.7L897.9 101.6"/>
<path fill="#2cffd3" d="M897.7 102.0L901.9 103.1L904.9 92.6L900.7 91.5"/>
<path fill="#33ffcc" d="M890.1 143.4L894.2 144.6L897.2 134.1L893.1 132.9"/>
<path fill="#2dffd2" d="M893.0 133.3L897.1 134.5L900.1 124.0L896.0 122.8"/>
<path fill="#30ffcf" d="M895.8 123.2L900.0 124.4L903.0 113.9L898.8 112.8"/>
<path fill="#3cffc3" d="M898.7 113.1L902.9 114.3L905.9 103.8L901.7 102.7"/>
<path fill="#40ffbf" d="M901.6 103.0L905.8 104.2L908.8 93.7L904.6 92.6"/>
<path fill="#31ffce" d="M893.9 144.5L898.0 145.6L901.0 135.2L896.9 134.0"/>
<path fill="#36ffc9" d="M896.8 134.4L900.9 135.6L903.9 125.1L899.8 123.9"/>
<path fill="#24ffdb" d="M899.7 124.3L903.8 125.5L906.9 115.0L902.7 113.8"/>
<path fill="#38ffc7" d="M902.6 114.2L906.7 115.4L909.8 104.9L905.6 103.7"/>
<path fill="#26ffd9" d="M905.5 104.1L909.7 105.3L912.7 94.8L908.5 93.7"/>
<path fill="#44ffbb" d="M897.7 145.6L901.8 146.7L904.8 136.3L900.7 135.1"/>
<path fill="#46ffb9" d="M900.6 135.5L904.7 136.6L907.8 126.2L903.6 125.0"/>
<path fill="#3effc1" d="M903.5 125.4L907.7 126.6L910.7 116.1L906.6 114.9"/>
<path fill="#40ffbf" d="M906.4 115.3L910.6 116.5L913.7 106.0L909.5 104.8"/>
<path fill="#44ffbb" d="M909.4 105.2L913.5 106.4L916.6 95.9L912.4 94.8"/>
<path fill="#47ffb8" d="M901.5 146.6L905.6 147.8L908.7 137.3L904.5 136.2"/>
<path fill="#42ffbd" d="M904.4 136.6L908.5 137.7L911.6 127.3L907.5 126.1"/>
<path fill="#42ffbd" d="M907.4 126.5L911.5 127.6L914.6 117.2L910.4 116.0"/>
<path fill="#38ffc7" d="M910.3 116.4L914.5 117.6L917.5 107.1L913.4 105.9"/>
<path fill="#46ffb9" d="M913.2 106.3L917.4 107.5L920.5 97.0L916.3 95.8"/>
<path fill="#43ffbc" d="M905.3 147.7L909.4 148.9L912.5 138.4L908.4 137.2"/>
<path fill="#50ffaf" d="M908.2 137.6L912.4 138.8L915.5 128.3L911.3 127.2"/>
<path fill="#51ffae" d="M911.2 127.6L915.3 128.7L918.4 118.3L914.3 117.1"/>
<path fill="#49ffb6" d="M914.2 117.5L918.3 118.6L921.4 108.2L917.2 107.0"/>
<path fill="#42ffbd" d="M917.1 107.4L921.3 108.6L924.4 98.1L920.2 96.9"/>
<path fill="#4dffb2" d="M909.1 148.8L913.2 149.9L916.3 139.5L912.2 138.3"/>
<path fill="#4effb1" d="M912.1 138.7L916.2 139.9L919.3 129.4L915.2 128.2"/>
<path fill="#55ffaa" d="M915.0 128.6L919.2 129.8L922.3 119.3L918.1 118.2"/>
<path fill="#4dffb2" d="M918.0 118.6L922.2 119.7L925.2 109.3L921.1 108.1"/>
<path fill="#55ffaa" d="M921.0 108.5L925.1 109.7L928.2 99.2L924.1 98.0"/>
<path fill="#60ff9f" d="M912.9 149.9L917.1 151.0L920.2 140.6L916.0 139.4"/>
<path fill="#6eff91" d="M915.9 139.8L920.0 140.9L923.1 130.5L919.0 129.3"/>
<path fill="#61ff9e" d="M918.9 129.7L923.0 130.9L926.1 120.4L922.0 119.3"/>
<path fill="#71ff8e" d="M921.9 119.6L926.0 120.8L929.1 110.4L924.9 109.2"/>
<path fill="#72ff8d" d="M924.8 109.6L929.0 110.7L932.1 100.3L927.9 99.1"/>
<path fill="#74ff8b" d="M916.8 150.9L920.9 152.1L924.0 141.6L919.9 140.5"/>
<path fill="#7fff80" d="M919.7 140.9L923.9 142.0L927.0 131.6L922.8 130.4"/>
<path fill="#7cff83" d="M922.7 130.8L926.9 132.0L929.9 121.5L925.8 120.3"/>
<path fill="#8aff75" d="M925.7 120.7L929.8 121.9L932.9 111.4L928.8 110.3"/>
<path fill="#76ff89" d="M928.7 110.7L932.8 111.8L935.9 101.4L931.8 100.2"/>
<path fill="#a1ff5e" d="M920.6 152.0L924.8 153.2L927.8 142.7L923.7 141.6"/>
<path fill="#9aff65" d="M923.6 141.9L927.7 143.1L930.8 132.7L926.7 131.5"/>
<path fill="#9cff63" d="M926.6 131.9L930.7 133.0L933.8 122.6L929.6 121.4"/>
<path fill="#8dff72" d="M929.5 121.8L933.7 123.0L936.8 112.5L932.6 111.4"/>
<path fill="#a0ff5f" d="M932.5 111.7L936.6 112.9L939.7 102.4L935.6 101.3"/>
<path fill="#8aff75" d="M927.7 154.0L931.8 155.2L934.9 144.7L930.7 143.5"/>
<path fill="#89ff76" d="M930.6 143.9L934.8 145.1L937.9 134.7L933.7 133.5"/>
<path fill="#77ff88" d="M933.6 133.9L937.8 135.0L940.9 124.6L936.7 123.4"/>
<path fill="#86ff79" d="M936.6 123.8L940.8 125.0L943.9 114.5L939.7 113.3"/>
<path fill="#8aff75" d="M939.5 113.7L943.8 114.9L946.8 104.4L942.6 103.3"/>
<path fill="#71ff8e" d="M931.5 155.1L935.7 156.3L938.8 145.8L934.6 144.6"/>
<path fill="#7bff84" d="M934.5 145.0L938.7 146.2L941.8 135.7L937.6 134.6"/>
<path fill="#6dff92" d="M937.5 135.0L941.7 136.1L944.8 125.7L940.6 124.5"/>
<path fill="#7fff80" d="M940.5 124.9L944.7 126.1L947.8 115.6L943.6 114.4"/>
<path fill="#6fff90" d="M943.5 114.8L947.7 116.0L950.8 105.5L946.5 104.4"/>
<path fill="#7dff82" d="M938.6 157.1L943.0 158.3L946.1 147.9L941.7 146.6"/>
<path fill="#85ff7a" d="M941.6 147.0L946.0 148.2L949.1 137.8L944.7 136.6"/>
<path fill="#90ff6f" d="M944.6 136.9L948.9 138.2L952.0 127.7L947.7 126.5"/>
<path fill="#7eff81" d="M947.6 126.9L951.9 128.1L955.0 117.7L950.7 116.4"/>
<path fill="#80ff7f" d="M950.6 116.8L954.9 118.0L958.0 107.6L953.7 106.4"/>
<path fill="#75ff8a" d="M942.7 158.2L947.0 159.4L950.1 149.0L945.8 147.8"/>
<path fill="#6eff91" d="M945.7 148.2L950.0 149.4L953.1 138.9L948.8 137.7"/>
<path fill="#72ff8d" d="M948.6 138.1L953.0 139.3L956.1 128.9L951.7 127.6"/>
<path fill="#71ff8e" d="M951.6 128.0L956.0 129.2L959.1 118.8L954.7 117.6"/>
<path fill="#84ff7b" d="M954.6 118.0L959.0 119.2L962.1 108.7L957.7 107.5"/>
<path fill="#84ff7b" d="M946.7 159.4L951.0 160.6L954.2 150.1L949.8 148.9"/>
<path fill="#72ff8d" d="M949.7 149.3L954.0 150.5L957.2 140.1L952.8 138.8"/>
<path fill="#81ff7e" d="M952.7 139.2L957.0 140.4L960.1 130.0L955.8 128.8"/>
<path fill="#70ff8f" d="M955.7 129.2L960.0 130.4L963.1 119.9L958.8 118.7"/>
<path fill="#7bff84" d="M958.7 119.1L963.0 120.3L966.1 109.9L961.8 108.6"/>
<path fill="#71ff8e" d="M950.7 160.5L955.1 161.7L958.2 151.3L953.9 150.0"/>
<path fill="#7eff81" d="M953.7 150.4L958.1 151.7L961.2 141.2L956.9 140.0"/>
<path fill="#76ff89" d="M956.7 140.4L961.1 141.6L964.2 131.1L959.8 129.9"/>
<path fill="#77ff88" d="M959.7 130.3L964.1 131.5L967.2 121.1L962.8 119.9"/>
<path fill="#7eff81" d="M962.7 120.2L967.1 121.5L970.2 111.0L965.8 109.8"/>
<path fill="#70ff8f" d="M954.8 161.6L959.1 162.9L962.2 152.4L957.9 151.2"/>
<path fill="#67ff98" d="M957.8 151.6L962.1 152.8L965.2 142.4L960.9 141.1"/>
<path fill="#61ff9e" d="M960.8 141.5L965.1 142.8L968.2 132.3L963.9 131.1"/>
<path fill="#6bff94" d="M963.8 131.4L968.1 132.7L971.2 122.2L966.9 121.0"/>
<path fill="#5effa1" d="M966.8 121.4L971.1 122.6L974.2 112.2L969.9 110.9"/>
<path fill="#77ff88" d="M958.8 162.8L963.2 164.0L966.3 153.6L961.9 152.3"/>
<path fill="#72ff8d" d="M961.8 152.7L966.2 154.0L969.3 143.5L964.9 142.3"/>
<path fill="#7cff83" d="M964.8 142.7L969.2 143.9L972.3 133.5L967.9 132.2"/>
<path fill="#74ff8b" d="M967.8 132.6L972.2 133.8L975.3 123.4L970.9 122.2"/>
<path fill="#6dff92" d="M970.8 122.5L975.2 123.8L978.3 113.3L973.9 112.1"/>
<path fill="#60ff9f" d="M962.9 163.9L967.2 165.2L970.3 154.7L966.0 153.5"/>
<path fill="#73ff8c" d="M965.9 153.9L970.2 155.1L973.3 144.7L969.0 143.4"/>
<path fill="#65ff9a" d="M968.9 143.8L973.2 145.1L976.3 134.6L972.0 133.4"/>
<path fill="#6eff91" d="M971.9 133.8L976.2 135.0L979.3 124.6L975.0 123.3"/>
<path fill="#77ff88" d="M974.9 123.7L979.2 124.9L982.4 114.5L978.0 113.3"/>
<path fill="#67ff98" d="M966.9 165.1L971.2 166.3L974.4 155.9L970.0 154.7"/>
<path fill="#5effa1" d="M969.9 155.0L974.3 156.3L977.4 145.8L973.0 144.6"/>
<path fill="#57ffa8" d="M972.9 145.0L977.3 146.2L980.4 135.8L976.0 134.5"/>
<path fill="#57ffa8" d="M975.9 134.9L980.3 136.2L983.4 125.7L979.0 124.5"/>
<path fill="#5affa5" d="M978.9 124.9L983.3 126.1L986.4 115.7L982.1 114.4"/>
<path fill="#5affa5" d="M970.9 166.3L975.3 167.5L978.4 157.0L974.1 155.8"/>
<path fill="#5cffa3" d="M974.0 156.2L978.3 157.4L981.4 147.0L977.1 145.7"/>
<path fill="#65ff9a" d="M977.0 146.1L981.3 147.4L984.4 136.9L980.1 135.7"/>
<path fill="#52ffad" d="M980.0 136.1L984.3 137.3L987.5 126.9L983.1 125.6"/>
<path fill="#55ffaa" d="M983.0 126.0L987.3 127.3L990.5 116.8L986.1 115.6"/>
<path fill="#48ffb7" d="M975.0 167.4L979.3 168.6L982.5 158.2L978.1 157.0"/>
<path fill="#48ffb7" d="M978.0 157.3L982.3 158.6L985.5 148.1L981.1 146.9"/>
<path fill="#50ffaf" d="M981.0 147.3L985.4 148.5L988.5 138.1L984.1 136.8"/>
<path fill="#4affb5" d="M984.0 137.2L988.4 138.5L991.5 128.0L987.2 126.8"/>
<path fill="#50ffaf" d="M987.0 127.2L991.4 128.4L994.5 118.0L990.2 116.7"/>
<path fill="#43ffbc" d="M979.0 168.6L983.4 169.8L986.5 159.4L982.2 158.1"/>
<path fill="#43ffbc" d="M982.0 158.5L986.4 159.7L989.5 149.3L985.2 148.1"/>
<path fill="#3affc5" d="M985.1 148.4L989.4 149.7L992.5 139.2L988.2 138.0"/>
<path fill="#44ffbb" d="M988.1 138.4L992.4 139.6L995.5 129.2L991.2 127.9"/>
<path fill="#41ffbe" d="M991.1 128.3L995.4 129.6L998.6 119.1L994.2 117.9"/>
<path fill="#41ffbe" d="M983.1 169.7L987.5 171.0L990.6 160.5L986.2 159.3"/>
<path fill="#30ffcf" d="M986.1 159.7L990.5 160.9L993.6 150.5L989.2 149.2"/>
<path fill="#2effd1" d="M989.1 149.6L993.4 150.8L996.5 140.4L992.2 139.2"/>
<path fill="#2dffd2" d="M992.1 139.5L996.4 140.8L999.5 130.3L995.2 129.1"/>
<path fill="#3affc5" d="M995.1 129.5L999.4 130.7L1002.5 120.2L998.3 119.0"/>
<path fill="#47ffb8" d="M987.2 170.9L991.7 172.2L994.7 161.7L990.3 160.4"/>
<path fill="#3effc1" d="M990.2 160.8L994.6 162.1L997.6 151.6L993.3 150.4"/>
<path fill="#3bffc4" d="M993.1 150.8L997.5 152.0L1000.5 141.5L996.2 140.3"/>
<path fill="#35ffca" d="M996.1 140.7L1000.4 141.9L1003.4 131.4L999.2 130.2"/>
<path fill="#44ffbb" d="M999.1 130.6L1003.3 131.8L1006.4 121.4L1002.2 120.2"/>
<path fill="#2dffd2" d="M991.3 172.1L995.8 173.4L998.8 162.9L994.4 161.6"/>
<path fill="#34ffcb" d="M994.3 162.0L998.7 163.3L1001.6 152.8L997.3 151.5"/>
<path fill="#2fffd0" d="M997.2 151.9L1001.5 153.2L1004.5 142.7L1000.2 141.4"/>
<path fill="#3bffc4" d="M1000.1 141.8L1004.4 143.1L1007.4 132.6L1003.1 131.4"/>
<path fill="#36ffc9" d="M1003.0 131.7L1007.3 133.0L1010.3 122.5L1006.1 121.3"/>
<path fill="#24ffdb" d="M995.5 173.3L999.9 174.5L1002.9 164.0L998.5 162.8"/>
<path fill="#0ffff0" d="M998.4 163.2L1002.8 164.4L1005.7 153.9L1001.3 152.7"/>
<path fill="#1bffe4" d="M1001.2 153.1L1005.6 154.3L1008.5 143.8L1004.2 142.6"/>
<path fill="#18ffe7" d="M1004.1 143.0L1008.4 144.2L1011.3 133.7L1007.1 132.5"/>
<path fill="#13ffec" d="M1007.0 132.9L1011.2 134.1L1014.2 123.6L1010.0 122.4"/>
<path fill="#0cfff3" d="M999.6 174.4L1004.1 175.7L1007.0 165.2L1002.6 164.0"/>
<path fill="#00f8ff" d="M1002.5 164.3L1006.9 165.6L1009.7 155.1L1005.4 153.8"/>
<path fill="#06fff9" d="M1005.3 154.2L1009.6 155.5L1012.5 145.0L1008.2 143.7"/>
<path fill="#0ffff0" d="M1008.1 144.1L1012.4 145.3L1015.3 134.8L1011.0 133.6"/>
<path fill="#00fbff" d="M1010.9 134.0L1015.2 135.2L1018.1 124.7L1013.9 123.5"/>
<path fill="#00f6ff" d="M1003.8 175.6L1008.2 176.9L1011.0 166.4L1006.7 165.1"/>
<path fill="#00f3ff" d="M1006.6 165.5L1010.9 166.8L1013.8 156.2L1009.4 155.0"/>
<path fill="#00f7ff" d="M1009.3 155.4L1013.7 156.6L1016.5 146.1L1012.2 144.9"/>
<path fill="#00fbff" d="M1012.1 145.3L1016.4 146.5L1019.2 136.0L1015.0 134.7"/>
<path fill="#00ebff" d="M1014.9 135.1L1019.1 136.3L1022.0 125.8L1017.8 124.6"/>
<path fill="#00d7ff" d="M1007.9 176.8L1012.3 177.9L1015.1 167.3L1010.7 166.3"/>
<path fill="#00d1ff" d="M1010.6 166.7L1015.0 167.7L1017.8 157.2L1013.5 156.1"/>
<path fill="#00e6ff" d="M1013.4 156.5L1017.7 157.6L1020.5 147.0L1016.2 146.0"/>
<path fill="#00e3ff" d="M1016.1 146.4L1020.4 147.4L1023.2 136.9L1019.0 135.9"/>
<path fill="#00e1ff" d="M1018.8 136.3L1023.1 137.3L1025.9 126.7L1021.7 125.7"/>
<path fill="#00c0ff" d="M1012.0 177.8L1016.4 178.8L1019.2 168.2L1014.8 167.3"/>
<path fill="#00bdff" d="M1014.7 167.6L1019.1 168.6L1021.9 158.1L1017.5 157.1"/>
<path fill="#00b6ff" d="M1017.4 157.5L1021.8 158.5L1024.5 147.9L1020.2 147.0"/>
<path fill="#00bdff" d="M1020.1 147.4L1024.4 148.3L1027.2 137.8L1022.9 136.8"/>
<path fill="#00b6ff" d="M1022.8 137.2L1027.1 138.2L1029.9 127.6L1025.6 126.7"/>
<path fill="#008fff" d="M1016.1 178.7L1020.5 179.7L1023.3 169.2L1018.9 168.2"/>
<path fill="#0093ff" d="M1018.8 168.6L1023.2 169.5L1025.9 159.0L1021.6 158.0"/>
<path fill="#008eff" d="M1021.5 158.4L1025.8 159.4L1028.5 148.8L1024.2 147.9"/>
<path fill="#0095ff" d="M1024.1 148.3L1028.4 149.2L1031.2 138.7L1026.9 137.7"/>
<path fill="#009fff" d="M1026.8 138.1L1031.1 139.1L1033.8 128.5L1029.6 127.6"/>
<path fill="#0092ff" d="M1020.2 179.6L1024.6 180.6L1027.4 170.1L1023.0 169.1"/>
<path fill="#008fff" d="M1022.9 169.5L1027.3 170.5L1030.0 159.9L1025.6 158.9"/>
<path fill="#0084ff" d="M1025.5 159.3L1029.9 160.3L1032.6 149.7L1028.2 148.8"/>
<path fill="#008bff" d="M1028.1 149.2L1032.5 150.1L1035.2 139.6L1030.9 138.6"/>
<path fill="#0088ff" d="M1030.8 139.0L1035.1 139.9L1037.8 129.4L1033.5 128.4"/>
<path fill="#0075ff" d="M1024.3 180.6L1028.8 181.6L1031.4 171.0L1027.0 170.0"/>
<path fill="#006fff" d="M1026.9 170.4L1031.3 171.4L1034.0 160.8L1029.7 159.8"/>
<path fill="#0078ff" d="M1029.6 160.2L1033.9 161.2L1036.6 150.6L1032.3 149.7"/>
<path fill="#0080ff" d="M1032.2 150.0L1036.5 151.0L1039.1 140.4L1034.9 139.5"/>
<path fill="#006eff" d="M1034.8 139.9L1039.0 140.8L1041.7 130.3L1037.5 129.3"/>
<path fill="#0058ff" d="M1032.9 182.5L1037.1 183.6L1039.7 173.0L1035.6 172.0"/>
<path fill="#005eff" d="M1035.5 172.4L1039.6 173.4L1042.2 162.8L1038.1 161.8"/>
<path fill="#005dff" d="M1038.0 162.2L1042.1 163.2L1044.8 152.6L1040.6 151.6"/>
<path fill="#006aff" d="M1040.5 152.0L1044.7 153.0L1047.3 142.4L1043.2 141.4"/>
<path fill="#006fff" d="M1043.1 141.8L1047.2 142.8L1049.9 132.2L1045.7 131.2"/>
<path fill="#0059ff" d="M1036.8 183.5L1040.9 184.5L1043.6 173.9L1039.4 172.9"/>
<path fill="#0067ff" d="M1039.3 173.3L1043.5 174.3L1046.1 163.7L1041.9 162.7"/>
<path fill="#005aff" d="M1041.8 163.1L1046.0 164.1L1048.6 153.5L1044.5 152.5"/>
<path fill="#0057ff" d="M1044.4 152.9L1048.5 153.9L1051.2 143.4L1047.0 142.3"/>
<path fill="#0068ff" d="M1046.9 142.7L1051.1 143.7L1053.7 133.2L1049.6 132.1"/>
<path fill="#005dff" d="M1040.6 184.4L1044.8 185.4L1047.4 174.9L1043.3 173.8"/>
<path fill="#005cff" d="M1043.2 174.2L1047.3 175.2L1049.9 164.7L1045.8 163.7"/>
<path fill="#0064ff" d="M1045.7 164.0L1049.8 165.1L1052.5 154.5L1048.3 153.5"/>
<path fill="#0057ff" d="M1048.2 153.9L1052.4 154.9L1055.0 144.3L1050.9 143.3"/>
<path fill="#0061ff" d="M1050.8 143.7L1054.9 144.7L1057.6 134.1L1053.4 133.1"/>
<path fill="#0060ff" d="M1044.5 185.4L1048.6 186.4L1051.3 175.8L1047.1 174.8"/>
<path fill="#0056ff" d="M1047.0 175.2L1051.2 176.2L1053.8 165.6L1049.6 164.6"/>
<path fill="#005dff" d="M1049.5 165.0L1053.7 166.0L1056.3 155.4L1052.2 154.4"/>
<path fill="#0059ff" d="M1052.1 154.8L1056.2 155.8L1058.9 145.2L1054.7 144.2"/>
<path fill="#0052ff" d="M1054.6 144.6L1058.8 145.6L1061.4 135.1L1057.3 134.0"/>
<path fill="#004cff" d="M1048.3 186.3L1052.5 187.3L1055.1 176.7L1051.0 175.7"/>
<path fill="#003eff" d="M1050.9 176.1L1055.0 177.1L1057.6 166.6L1053.5 165.5"/>
<path fill="#0053ff" d="M1053.4 165.9L1057.5 166.9L1060.2 156.4L1056.0 155.4"/>
<path fill="#0040ff" d="M1055.9 155.7L1060.1 156.8L1062.7 146.2L1058.6 145.2"/>
<path fill="#003dff" d="M1058.5 145.6L1062.6 146.6L1065.3 136.0L1061.1 135.0"/>
<path fill="#004eff" d="M1052.2 187.2L1056.3 188.3L1058.9 177.7L1054.8 176.7"/>
<path fill="#0040ff" d="M1054.7 177.1L1058.9 178.1L1061.5 167.5L1057.3 166.5"/>
<path fill="#003bff" d="M1057.2 166.9L1061.4 167.9L1064.0 157.3L1059.9 156.3"/>
<path fill="#0038ff" d="M1059.8 156.7L1063.9 157.7L1066.6 147.1L1062.4 146.1"/>
<path fill="#0038ff" d="M1062.3 146.5L1066.5 147.5L1069.1 136.9L1065.0 135.9"/>
<path fill="#0030ff" d="M1056.0 188.2L1060.2 189.2L1062.8 178.6L1058.6 177.6"/>
<path fill="#0031ff" d="M1058.6 178.0L1062.7 179.0L1065.3 168.4L1061.2 167.4"/>
<path fill="#0032ff" d="M1061.1 167.8L1065.2 168.8L1067.9 158.3L1063.7 157.2"/>
<path fill="#0022ff" d="M1063.6 157.6L1067.8 158.6L1070.4 148.1L1066.3 147.1"/>
<path fill="#002fff" d="M1066.2 147.4L1070.3 148.4L1073.0 137.9L1068.8 136.9"/>
<path fill="#0028ff" d="M1059.9 189.1L1064.0 190.1L1066.7 179.6L1062.5 178.6"/>
<path fill="#0028ff" d="M1062.4 178.9L1066.6 179.9L1069.2 169.4L1065.0 168.4"/>
<path fill="#002aff" d="M1065.0 168.8L1069.1 169.7L1071.7 159.2L1067.6 158.2"/>
<path fill="#0016ff" d="M1067.5 158.6L1071.6 159.6L1074.3 149.0L1070.1 148.0"/>
<path fill="#0029ff" d="M1070.0 148.4L1074.2 149.4L1076.8 138.8L1072.7 137.8"/>
<path fill="#0035ff" d="M1063.7 190.1L1067.9 191.0L1070.5 180.4L1066.4 179.5"/>
<path fill="#0020ff" d="M1066.3 179.9L1070.4 180.8L1073.0 170.2L1068.9 169.3"/>
<path fill="#0023ff" d="M1068.8 169.7L1072.9 170.6L1075.6 160.0L1071.4 159.1"/>
<path fill="#0020ff" d="M1071.3 159.5L1075.5 160.4L1078.1 149.9L1074.0 148.9"/>
<path fill="#001eff" d="M1073.9 149.3L1078.0 150.2L1080.6 139.7L1076.5 138.7"/>
<path fill="#002cff" d="M1067.6 190.9L1071.8 191.9L1074.4 181.3L1070.2 180.4"/>
<path fill="#0028ff" d="M1070.1 180.7L1074.3 181.7L1076.9 171.1L1072.7 170.2"/>
<path fill="#002cff" d="M1072.7 170.6L1076.8 171.5L1079.4 160.9L1075.3 160.0"/>
<path fill="#0028ff" d="M1075.2 160.4L1079.3 161.3L1081.9 150.7L1077.8 149.8"/>
<path fill="#001fff" d="M1077.7 150.2L1081.8 151.1L1084.4 140.5L1080.3 139.6"/>
</g>
<polyline fill="none" stroke="#d42424" stroke-opacity="0.72" stroke-width="2.8" stroke-linejoin="round" points="318.0,-4.3 335.0,-1.2 380.0,7.3 431.0,17.0 480.0,26.0 513.0,32.3 560.0,41.6 600.4,49.6 650.0,60.2 690.0,68.8 716.5,76.2 745.0,83.8 773.8,91.5 830.0,106.1 890.4,121.7 925.0,131.4 959.0,141.0 990.0,149.9 1014.3,156.8 1035.7,161.6 1050.0,165.1 1061.0,167.8"/>
<g stroke="#14e01e" stroke-linecap="round" fill="none"><path d="M1070.6 153.2 L1068.3 169 L1063.6 184.3" stroke-width="2"/><path d="M1059.5 167.6 L1076.5 171.3" stroke-width="2.2"/><path d="M1061.6 164.2 L1060.2 171.2" stroke-width="1.6"/></g>
</svg>
</div>
<!-- colorbar -->
<div class="abs" style="left:137px;top:3px;width:13px;height:298px;box-sizing:border-box;border:1px solid #3a3a50;border-width:1px 1px 1px 1px;background:linear-gradient(to bottom,#800000 0%,#ff0000 12.5%,#ffff00 37.5%,#00ffff 62.5%,#0000ff 87.5%,#000080 100%)"></div>
<div class="cl" style="top:10.0px">315</div><div class="ct" style="top:14.7px"></div>
<div class="cl" style="top:47.3px">300</div><div class="ct" style="top:52.0px"></div>
<div class="cl" style="top:84.6px">285</div><div class="ct" style="top:89.3px"></div>
<div class="cl" style="top:121.9px">270</div><div class="ct" style="top:126.6px"></div>
<div class="cl" style="top:159.2px">255</div><div class="ct" style="top:163.9px"></div>
<div class="cl" style="top:196.5px">240</div><div class="ct" style="top:201.2px"></div>
<div class="cl" style="top:233.8px">225</div><div class="ct" style="top:238.5px"></div>
<div class="cl" style="top:271.1px">210</div><div class="ct" style="top:275.8px"></div>
<!-- zoom slider -->
<div class="abs" style="left:178px;top:0;width:4px;height:122px;background:#fff;box-shadow:0 0 2px rgba(0,0,0,.55)"></div>
<div class="abs" style="left:171px;top:46px;width:17px;height:9px;background:#fff;border-radius:2px;box-shadow:0 1px 3px rgba(0,0,0,.6)"></div>
<div class="abs" style="left:175px;top:49px;width:9px;height:2px;background:#8a8a8a"></div>
<div class="abs" style="left:172px;top:122px;width:17px;height:17px;background:#fff;border-radius:2.5px;box-shadow:0 1px 3px rgba(0,0,0,.55)"></div>
<div class="abs" style="left:176px;top:129px;width:9px;height:2px;background:#8a8a8a"></div>
<!-- google -->
<div class="abs" style="left:136px;top:302px;font-family:'Liberation Serif','DejaVu Serif',serif;font-size:23.5px;line-height:28px;color:#fbfbfb;letter-spacing:-1.3px;text-shadow:1px 1px 1px rgba(60,70,90,.75),0 0 1px rgba(80,90,110,.6)">Google</div>
<!-- Map tooltip -->
<div class="abs" style="left:1267px;top:301px;width:27px;height:19px;background:#ffffcc;box-shadow:-1px 3px 8px rgba(40,60,90,.65);font-size:11.5px;line-height:19px;text-align:center;color:#000">Map</div>
<!-- resize dots top panel -->
<div class="dot" style="left:1295px;top:335px;background:#ddd"></div>
<div class="dot" style="left:1291px;top:339px;background:#ddd"></div><div class="dot" style="left:1295px;top:339px;background:#aaa"></div>
<div class="dot" style="left:1287px;top:343px;background:#e2e2e2"></div><div class="dot" style="left:1291px;top:343px;background:#666"></div><div class="dot" style="left:1295px;top:343px;background:#000"></div>

<!-- ===== bottom-left panel ===== -->
<div class="panel" style="left:-10px;top:368px;width:513px;height:552px"></div>
<div class="abs" style="left:52px;top:409px;width:6px;height:456px;background:#ebebeb"></div>
<div class="abs" style="left:54px;top:632px;width:1px;height:18px;background:#b8bcc8"></div>
<div class="abs" id="irc" style="left:58px;top:409px;width:438px;height:456px;box-sizing:border-box;background:#fff;border:1px solid #a9b4c8;border-right:none;overflow:hidden"></div>
<div class="inp" style="left:71px;top:395px;width:165px;height:18px;clip-path:inset(15px 0 0 0)"></div>
<div class="abs" style="left:242px;top:395px;width:58px;height:22px;box-sizing:border-box;border:1px solid #c9c9c9;border-radius:0 0 4px 4px;background:#e4e4e4;clip-path:inset(15px 0 0 0)"></div>
<div class="abs" style="left:70.5px;top:439px;font-weight:bold;font-size:17.8px;line-height:24px;color:#000;white-space:nowrap">Connect using the fields below</div>
<div class="lbl" style="left:78px;top:485px">Server</div>
<div class="inp" style="left:71px;top:503px;width:294px;height:32px"></div>
<div class="lbl" style="left:78px;top:545px">Port</div>
<div class="inp" style="left:71px;top:563px;width:87px;height:32px"></div>
<svg class="abs" style="left:170px;top:571px" width="16" height="14" viewBox="0 0 16 14"><rect x="1.8" y="2.1" width="10.4" height="9.7" rx="2.2" fill="#fff" stroke="#5a5a5a" stroke-width="1.2"/><path d="M4.5 6.4 L7.2 9.1 L13.1 3.2" fill="none" stroke="#111" stroke-width="2.5" stroke-linecap="round" stroke-linejoin="round"/></svg>
<div class="abs" style="left:187px;top:570px;font-size:13px;line-height:16px;white-space:nowrap;color:#111">Secure (SSL/TLS)</div>
<div class="lbl" style="left:78px;top:605px">Username</div>
<div class="lbl" style="left:229px;top:605px">Password</div>
<div class="inp" style="left:71px;top:623px;width:139px;height:32px"></div>
<div class="inp" style="left:222px;top:623px;width:139px;height:32px"></div>
<div class="lbl" style="left:78px;top:665px">Nickname</div>
<div class="lbl" style="left:229px;top:665px">Real Name</div>
<div class="inp" style="left:71px;top:683px;width:139px;height:32px"></div>
<div class="inp" style="left:222px;top:683px;width:139px;height:32px"></div>
<div class="lbl" style="left:78px;top:725px">Channels <span style="font-style:italic;font-size:9.2px;color:#555">(Separate multiple channels with a comma)</span></div>
<div class="inp" style="left:71px;top:743px;width:294px;height:32px"></div>
<div class="abs" style="left:73px;top:800px;width:78px;height:32px;box-sizing:border-box;border:1px solid #0040b8;border-radius:4px;background:linear-gradient(#0088cc,#0044cc);color:#fff;font-size:13px;line-height:33px;text-align:center;text-shadow:0 -1px 0 rgba(0,0,0,.3)">Connect</div>
<!-- bottom bar -->
<div class="abs" style="left:0;top:870px;width:496px;height:31px;box-sizing:border-box;border-top:1px solid #b3bccc;border-bottom:1px solid #b3bccc;background:linear-gradient(#fbfbfb,#eeeeee)"></div>
<div class="dot" style="left:494px;top:908px;background:#ddd"></div>
<div class="dot" style="left:490px;top:911px;background:#ddd"></div><div class="dot" style="left:494px;top:911px;background:#aaa"></div>
<div class="dot" style="left:486px;top:915px;background:#e2e2e2"></div><div class="dot" style="left:490px;top:915px;background:#666"></div><div class="dot" style="left:494px;top:915px;background:#000"></div>

<!-- ===== bottom-right panel ===== -->
<div class="panel" style="left:513px;top:368px;width:793px;height:660px"></div>
<svg class="abs" style="left:522px;top:380px" width="16" height="14" viewBox="0 0 16 14"><path d="M2.5 2.6 H4.6 L5.6 1 H10.4 L11.4 2.6 H13.5 A1.5 1.5 0 0 1 15 4.1 V11.5 A1.5 1.5 0 0 1 13.5 13 H2.5 A1.5 1.5 0 0 1 1 11.5 V4.1 A1.5 1.5 0 0 1 2.5 2.6 Z" fill="#000"/><circle cx="8" cy="7.6" r="3.1" fill="#fff"/><circle cx="8" cy="7.6" r="1.7" fill="#000"/></svg>
<div class="abs" style="left:544px;top:380px;font-size:12.8px;line-height:16px;white-space:nowrap;color:#111">Airborne Science Camera Feed</div>
<div class="abs" style="left:520px;top:405px;width:779px;height:30px;box-sizing:border-box;border:1px solid #a9b4c8;background:linear-gradient(#f6f6f6,#ececec)"></div>
<div class="lbl" style="left:533px;top:414.5px;font-size:9.6px">1. Select Aircraft</div>
<div class="abs" style="left:627px;top:408px;width:198px;height:24px;box-sizing:border-box;border:1px solid #a9b4c8;background:#fff"></div>
<div class="abs" style="left:634px;top:412px;font-size:13px;line-height:17px;white-space:nowrap;color:#111">Global Hawk AV6 (NASA872)</div>
<div class="abs" style="left:807px;top:409px;width:17px;height:22px;background:linear-gradient(#fafafa,#e9eaee)"></div>
<div class="abs" style="left:811px;top:418px;width:0;height:0;border-left:4px solid transparent;border-right:4px solid transparent;border-top:4px solid #9fb2cc"></div>
<div class="lbl" style="left:837px;top:414.5px;font-size:9.6px">2. Select Camera</div>
<div class="abs" style="left:933px;top:408px;width:121px;height:24px;box-sizing:border-box;border:1px solid #6f9bd6;background:#fff"></div>
<div class="abs" style="left:940px;top:412px;font-size:12.8px;line-height:17px;white-space:nowrap;color:#111">SHIS QuickLook</div>
<div class="abs" style="left:1035px;top:409px;width:18px;height:22px;background:linear-gradient(#b9d6fb,#7fb0ee)"></div>
<div class="abs" style="left:1040px;top:418px;width:0;height:0;border-left:4px solid transparent;border-right:4px solid transparent;border-top:4px solid #5a86c4"></div>
<!-- chart area -->
<div class="abs" style="left:520px;top:435px;width:779px;height:570px;background:#fff"></div>
<svg class="abs" style="left:520px;top:435px" width="779" height="570" viewBox="520 435 779 570" font-family="'Liberation Sans',sans-serif" font-weight="bold">
<g stroke="#858585" stroke-width="1" stroke-dasharray="1 2.5" fill="none" shape-rendering="crispEdges">
<line x1="670.5" y1="479.0" x2="670.5" y2="954.4"/>
<line x1="757.5" y1="479.0" x2="757.5" y2="954.4"/>
<line x1="844.5" y1="479.0" x2="844.5" y2="954.4"/>
<line x1="931.5" y1="479.0" x2="931.5" y2="954.4"/>
<line x1="1018.5" y1="479.0" x2="1018.5" y2="954.4"/>
<line x1="1105.5" y1="479.0" x2="1105.5" y2="954.4"/>
<line x1="1192.5" y1="479.0" x2="1192.5" y2="954.4"/>
<line x1="621.0" y1="507.5" x2="1225.6" y2="507.5"/>
<line x1="621.0" y1="531.5" x2="1225.6" y2="531.5"/>
<line x1="621.0" y1="551.5" x2="1225.6" y2="551.5"/>
<line x1="621.0" y1="569.5" x2="1225.6" y2="569.5"/>
<line x1="621.0" y1="692.5" x2="1225.6" y2="692.5"/>
<line x1="621.0" y1="754.5" x2="1225.6" y2="754.5"/>
<line x1="621.0" y1="799.5" x2="1225.6" y2="799.5"/>
<line x1="621.0" y1="833.5" x2="1225.6" y2="833.5"/>
<line x1="621.0" y1="861.5" x2="1225.6" y2="861.5"/>
<line x1="621.0" y1="885.5" x2="1225.6" y2="885.5"/>
<line x1="621.0" y1="905.5" x2="1225.6" y2="905.5"/>
<line x1="621.0" y1="923.5" x2="1225.6" y2="923.5"/>
</g>
<g stroke="#a8a8a8" stroke-width="1.7" stroke-dasharray="2 1.5" fill="none">
<line x1="621.0" y1="585.5" x2="1225.6" y2="585.5"/>
<line x1="621.0" y1="939.5" x2="1225.6" y2="939.5"/>
</g>
<line x1="621.0" y1="479.3" x2="1225.6" y2="479.3" stroke="#888" stroke-width="1.4"/>
<line x1="621.0" y1="479.5" x2="1225.6" y2="479.5" stroke="#222" stroke-width="1.2" stroke-dasharray="2 1"/>
<path d="M621.0 479.0 V954.4 H1225.6 V479.0" fill="none" stroke="#666" stroke-width="1.3"/>
<g stroke="#444" stroke-width="1.2">
<line x1="670.5" y1="954.4" x2="670.5" y2="947.4"/><line x1="670.5" y1="479.0" x2="670.5" y2="486.0"/>
<line x1="757.7" y1="954.4" x2="757.7" y2="947.4"/><line x1="757.7" y1="479.0" x2="757.7" y2="486.0"/>
<line x1="844.6" y1="954.4" x2="844.6" y2="947.4"/><line x1="844.6" y1="479.0" x2="844.6" y2="486.0"/>
<line x1="931.5" y1="954.4" x2="931.5" y2="947.4"/><line x1="931.5" y1="479.0" x2="931.5" y2="486.0"/>
<line x1="1018.4" y1="954.4" x2="1018.4" y2="947.4"/><line x1="1018.4" y1="479.0" x2="1018.4" y2="486.0"/>
<line x1="1105.2" y1="954.4" x2="1105.2" y2="947.4"/><line x1="1105.2" y1="479.0" x2="1105.2" y2="486.0"/>
<line x1="1192.2" y1="954.4" x2="1192.2" y2="947.4"/><line x1="1192.2" y1="479.0" x2="1192.2" y2="486.0"/>
<line x1="621.0" y1="507.4" x2="625.0" y2="507.4"/><line x1="1225.6" y1="507.4" x2="1221.6" y2="507.4"/>
<line x1="621.0" y1="531.1" x2="625.0" y2="531.1"/><line x1="1225.6" y1="531.1" x2="1221.6" y2="531.1"/>
<line x1="621.0" y1="551.6" x2="625.0" y2="551.6"/><line x1="1225.6" y1="551.6" x2="1221.6" y2="551.6"/>
<line x1="621.0" y1="569.7" x2="625.0" y2="569.7"/><line x1="1225.6" y1="569.7" x2="1221.6" y2="569.7"/>
<line x1="621.0" y1="692.5" x2="625.0" y2="692.5"/><line x1="1225.6" y1="692.5" x2="1221.6" y2="692.5"/>
<line x1="621.0" y1="754.8" x2="625.0" y2="754.8"/><line x1="1225.6" y1="754.8" x2="1221.6" y2="754.8"/>
<line x1="621.0" y1="799.0" x2="625.0" y2="799.0"/><line x1="1225.6" y1="799.0" x2="1221.6" y2="799.0"/>
<line x1="621.0" y1="833.3" x2="625.0" y2="833.3"/><line x1="1225.6" y1="833.3" x2="1221.6" y2="833.3"/>
<line x1="621.0" y1="861.4" x2="625.0" y2="861.4"/><line x1="1225.6" y1="861.4" x2="1221.6" y2="861.4"/>
<line x1="621.0" y1="885.1" x2="625.0" y2="885.1"/><line x1="1225.6" y1="885.1" x2="1221.6" y2="885.1"/>
<line x1="621.0" y1="905.6" x2="625.0" y2="905.6"/><line x1="1225.6" y1="905.6" x2="1221.6" y2="905.6"/>
<line x1="621.0" y1="923.7" x2="625.0" y2="923.7"/><line x1="1225.6" y1="923.7" x2="1221.6" y2="923.7"/>
<line x1="621.0" y1="585.9" x2="628.0" y2="585.9" stroke-width="1.6"/><line x1="1225.6" y1="585.9" x2="1218.6" y2="585.9" stroke-width="1.6"/>
<line x1="621.0" y1="939.9" x2="628.0" y2="939.9" stroke-width="1.6"/><line x1="1225.6" y1="939.9" x2="1218.6" y2="939.9" stroke-width="1.6"/>
</g>
<path fill="#ff0000" shape-rendering="crispEdges" d="M679.3 644.2l4.4 5.1l-4.4 5.1l-4.4-5.1zM684.7 644.2l4.4 5.1l-4.4 5.1l-4.4-5.1zM711.3 644.2l4.4 5.1l-4.4 5.1l-4.4-5.1zM716.6 644.2l4.4 5.1l-4.4 5.1l-4.4-5.1zM631.4 653.4l4.4 5.1l-4.4 5.1l-4.4-5.1zM637.4 653.4l4.4 5.1l-4.4 5.1l-4.4-5.1zM641.4 653.4l4.4 5.1l-4.4 5.1l-4.4-5.1zM647.7 653.4l4.4 5.1l-4.4 5.1l-4.4-5.1zM650.8 653.4l4.4 5.1l-4.4 5.1l-4.4-5.1zM659.3 653.4l4.4 5.1l-4.4 5.1l-4.4-5.1zM663.4 653.4l4.4 5.1l-4.4 5.1l-4.4-5.1zM667.8 653.4l4.4 5.1l-4.4 5.1l-4.4-5.1zM672.3 653.4l4.4 5.1l-4.4 5.1l-4.4-5.1zM680.8 653.4l4.4 5.1l-4.4 5.1l-4.4-5.1zM713.1 653.4l4.4 5.1l-4.4 5.1l-4.4-5.1zM723.4 653.4l4.4 5.1l-4.4 5.1l-4.4-5.1zM726.9 653.4l4.4 5.1l-4.4 5.1l-4.4-5.1zM733.2 653.4l4.4 5.1l-4.4 5.1l-4.4-5.1zM626.6 662.3l4.4 5.1l-4.4 5.1l-4.4-5.1zM629.8 662.3l4.4 5.1l-4.4 5.1l-4.4-5.1zM638.7 662.3l4.4 5.1l-4.4 5.1l-4.4-5.1zM646.8 662.3l4.4 5.1l-4.4 5.1l-4.4-5.1zM650.4 662.3l4.4 5.1l-4.4 5.1l-4.4-5.1zM654.4 662.3l4.4 5.1l-4.4 5.1l-4.4-5.1zM658.9 662.3l4.4 5.1l-4.4 5.1l-4.4-5.1zM662.0 662.3l4.4 5.1l-4.4 5.1l-4.4-5.1zM669.6 662.3l4.4 5.1l-4.4 5.1l-4.4-5.1zM674.1 662.3l4.4 5.1l-4.4 5.1l-4.4-5.1zM684.0 662.3l4.4 5.1l-4.4 5.1l-4.4-5.1zM692.5 662.3l4.4 5.1l-4.4 5.1l-4.4-5.1zM695.1 662.3l4.4 5.1l-4.4 5.1l-4.4-5.1zM705.9 662.3l4.4 5.1l-4.4 5.1l-4.4-5.1zM714.0 662.3l4.4 5.1l-4.4 5.1l-4.4-5.1zM718.0 662.3l4.4 5.1l-4.4 5.1l-4.4-5.1zM722.5 662.3l4.4 5.1l-4.4 5.1l-4.4-5.1zM726.5 662.3l4.4 5.1l-4.4 5.1l-4.4-5.1zM734.1 662.3l4.4 5.1l-4.4 5.1l-4.4-5.1zM635.1 671.1l4.4 5.1l-4.4 5.1l-4.4-5.1zM641.4 671.1l4.4 5.1l-4.4 5.1l-4.4-5.1zM645.9 671.1l4.4 5.1l-4.4 5.1l-4.4-5.1zM649.5 671.1l4.4 5.1l-4.4 5.1l-4.4-5.1zM652.6 671.1l4.4 5.1l-4.4 5.1l-4.4-5.1zM670.1 671.1l4.4 5.1l-4.4 5.1l-4.4-5.1zM673.7 671.1l4.4 5.1l-4.4 5.1l-4.4-5.1zM684.0 671.1l4.4 5.1l-4.4 5.1l-4.4-5.1zM703.2 671.1l4.4 5.1l-4.4 5.1l-4.4-5.1zM708.1 671.1l4.4 5.1l-4.4 5.1l-4.4-5.1zM712.6 671.1l4.4 5.1l-4.4 5.1l-4.4-5.1zM735.0 671.1l4.4 5.1l-4.4 5.1l-4.4-5.1zM638.3 679.2l4.4 5.1l-4.4 5.1l-4.4-5.1zM704.6 679.2l4.4 5.1l-4.4 5.1l-4.4-5.1zM726.0 679.2l4.4 5.1l-4.4 5.1l-4.4-5.1zM626.6 687.2l4.4 5.1l-4.4 5.1l-4.4-5.1zM639.2 687.2l4.4 5.1l-4.4 5.1l-4.4-5.1zM667.8 687.2l4.4 5.1l-4.4 5.1l-4.4-5.1zM700.1 687.2l4.4 5.1l-4.4 5.1l-4.4-5.1zM703.7 687.2l4.4 5.1l-4.4 5.1l-4.4-5.1zM735.0 687.2l4.4 5.1l-4.4 5.1l-4.4-5.1zM628.9 696.2l4.4 5.1l-4.4 5.1l-4.4-5.1zM641.9 696.2l4.4 5.1l-4.4 5.1l-4.4-5.1zM690.7 696.2l4.4 5.1l-4.4 5.1l-4.4-5.1zM695.6 696.2l4.4 5.1l-4.4 5.1l-4.4-5.1zM701.4 696.2l4.4 5.1l-4.4 5.1l-4.4-5.1zM706.8 696.2l4.4 5.1l-4.4 5.1l-4.4-5.1zM679.3 704.2l4.4 5.1l-4.4 5.1l-4.4-5.1zM690.2 704.2l4.4 5.1l-4.4 5.1l-4.4-5.1zM693.8 704.2l4.4 5.1l-4.4 5.1l-4.4-5.1zM679.0 712.3l4.4 5.1l-4.4 5.1l-4.4-5.1zM682.2 712.3l4.4 5.1l-4.4 5.1l-4.4-5.1zM689.8 712.3l4.4 5.1l-4.4 5.1l-4.4-5.1zM695.1 712.3l4.4 5.1l-4.4 5.1l-4.4-5.1zM700.5 712.3l4.4 5.1l-4.4 5.1l-4.4-5.1zM788.7 644.2l4.4 5.1l-4.4 5.1l-4.4-5.1zM808.0 644.2l4.4 5.1l-4.4 5.1l-4.4-5.1zM811.1 644.2l4.4 5.1l-4.4 5.1l-4.4-5.1zM813.8 644.2l4.4 5.1l-4.4 5.1l-4.4-5.1zM829.0 644.2l4.4 5.1l-4.4 5.1l-4.4-5.1zM834.4 644.2l4.4 5.1l-4.4 5.1l-4.4-5.1zM743.5 653.4l4.4 5.1l-4.4 5.1l-4.4-5.1zM747.1 653.4l4.4 5.1l-4.4 5.1l-4.4-5.1zM755.6 653.4l4.4 5.1l-4.4 5.1l-4.4-5.1zM776.2 653.4l4.4 5.1l-4.4 5.1l-4.4-5.1zM786.0 653.4l4.4 5.1l-4.4 5.1l-4.4-5.1zM789.6 653.4l4.4 5.1l-4.4 5.1l-4.4-5.1zM793.2 653.4l4.4 5.1l-4.4 5.1l-4.4-5.1zM797.2 653.4l4.4 5.1l-4.4 5.1l-4.4-5.1zM800.8 653.4l4.4 5.1l-4.4 5.1l-4.4-5.1zM810.2 653.4l4.4 5.1l-4.4 5.1l-4.4-5.1zM818.7 653.4l4.4 5.1l-4.4 5.1l-4.4-5.1zM832.6 653.4l4.4 5.1l-4.4 5.1l-4.4-5.1zM737.2 662.3l4.4 5.1l-4.4 5.1l-4.4-5.1zM748.4 662.3l4.4 5.1l-4.4 5.1l-4.4-5.1zM753.4 662.3l4.4 5.1l-4.4 5.1l-4.4-5.1zM759.2 662.3l4.4 5.1l-4.4 5.1l-4.4-5.1zM764.6 662.3l4.4 5.1l-4.4 5.1l-4.4-5.1zM768.1 662.3l4.4 5.1l-4.4 5.1l-4.4-5.1zM776.6 662.3l4.4 5.1l-4.4 5.1l-4.4-5.1zM780.7 662.3l4.4 5.1l-4.4 5.1l-4.4-5.1zM786.0 662.3l4.4 5.1l-4.4 5.1l-4.4-5.1zM790.1 662.3l4.4 5.1l-4.4 5.1l-4.4-5.1zM798.6 662.3l4.4 5.1l-4.4 5.1l-4.4-5.1zM801.7 662.3l4.4 5.1l-4.4 5.1l-4.4-5.1zM807.1 662.3l4.4 5.1l-4.4 5.1l-4.4-5.1zM834.9 662.3l4.4 5.1l-4.4 5.1l-4.4-5.1zM840.2 662.3l4.4 5.1l-4.4 5.1l-4.4-5.1zM845.1 662.3l4.4 5.1l-4.4 5.1l-4.4-5.1zM854.6 662.3l4.4 5.1l-4.4 5.1l-4.4-5.1zM737.2 671.1l4.4 5.1l-4.4 5.1l-4.4-5.1zM744.9 671.1l4.4 5.1l-4.4 5.1l-4.4-5.1zM748.4 671.1l4.4 5.1l-4.4 5.1l-4.4-5.1zM767.7 671.1l4.4 5.1l-4.4 5.1l-4.4-5.1zM776.6 671.1l4.4 5.1l-4.4 5.1l-4.4-5.1zM781.1 671.1l4.4 5.1l-4.4 5.1l-4.4-5.1zM828.6 671.1l4.4 5.1l-4.4 5.1l-4.4-5.1zM834.0 671.1l4.4 5.1l-4.4 5.1l-4.4-5.1zM839.8 671.1l4.4 5.1l-4.4 5.1l-4.4-5.1zM843.8 671.1l4.4 5.1l-4.4 5.1l-4.4-5.1zM848.3 671.1l4.4 5.1l-4.4 5.1l-4.4-5.1zM853.2 671.1l4.4 5.1l-4.4 5.1l-4.4-5.1zM748.0 679.2l4.4 5.1l-4.4 5.1l-4.4-5.1zM756.0 679.2l4.4 5.1l-4.4 5.1l-4.4-5.1zM770.4 679.2l4.4 5.1l-4.4 5.1l-4.4-5.1zM774.4 679.2l4.4 5.1l-4.4 5.1l-4.4-5.1zM850.5 679.2l4.4 5.1l-4.4 5.1l-4.4-5.1zM743.1 687.2l4.4 5.1l-4.4 5.1l-4.4-5.1zM754.3 687.2l4.4 5.1l-4.4 5.1l-4.4-5.1zM757.4 687.2l4.4 5.1l-4.4 5.1l-4.4-5.1zM757.8 696.2l4.4 5.1l-4.4 5.1l-4.4-5.1zM760.1 696.2l4.4 5.1l-4.4 5.1l-4.4-5.1zM754.3 704.2l4.4 5.1l-4.4 5.1l-4.4-5.1zM759.2 704.2l4.4 5.1l-4.4 5.1l-4.4-5.1zM780.0 704.2l4.4 5.1l-4.4 5.1l-4.4-5.1zM820.1 704.2l4.4 5.1l-4.4 5.1l-4.4-5.1zM757.8 712.3l4.4 5.1l-4.4 5.1l-4.4-5.1zM765.9 712.3l4.4 5.1l-4.4 5.1l-4.4-5.1zM769.0 712.3l4.4 5.1l-4.4 5.1l-4.4-5.1zM777.5 712.3l4.4 5.1l-4.4 5.1l-4.4-5.1zM967.8 644.2l4.4 5.1l-4.4 5.1l-4.4-5.1zM862.6 653.4l4.4 5.1l-4.4 5.1l-4.4-5.1zM892.2 653.4l4.4 5.1l-4.4 5.1l-4.4-5.1zM920.1 653.4l4.4 5.1l-4.4 5.1l-4.4-5.1zM957.1 653.4l4.4 5.1l-4.4 5.1l-4.4-5.1zM960.7 653.4l4.4 5.1l-4.4 5.1l-4.4-5.1zM968.3 653.4l4.4 5.1l-4.4 5.1l-4.4-5.1zM972.3 653.4l4.4 5.1l-4.4 5.1l-4.4-5.1zM860.4 662.3l4.4 5.1l-4.4 5.1l-4.4-5.1zM864.4 662.3l4.4 5.1l-4.4 5.1l-4.4-5.1zM887.2 662.3l4.4 5.1l-4.4 5.1l-4.4-5.1zM896.6 662.3l4.4 5.1l-4.4 5.1l-4.4-5.1zM904.3 662.3l4.4 5.1l-4.4 5.1l-4.4-5.1zM907.8 662.3l4.4 5.1l-4.4 5.1l-4.4-5.1zM916.8 662.3l4.4 5.1l-4.4 5.1l-4.4-5.1zM956.6 662.3l4.4 5.1l-4.4 5.1l-4.4-5.1zM960.7 662.3l4.4 5.1l-4.4 5.1l-4.4-5.1zM884.6 671.1l4.4 5.1l-4.4 5.1l-4.4-5.1zM916.3 671.1l4.4 5.1l-4.4 5.1l-4.4-5.1zM969.6 671.1l4.4 5.1l-4.4 5.1l-4.4-5.1zM885.0 679.2l4.4 5.1l-4.4 5.1l-4.4-5.1zM882.3 687.2l4.4 5.1l-4.4 5.1l-4.4-5.1zM905.1 687.2l4.4 5.1l-4.4 5.1l-4.4-5.1zM1001.0 644.2l4.4 5.1l-4.4 5.1l-4.4-5.1zM1003.2 644.2l4.4 5.1l-4.4 5.1l-4.4-5.1zM1066.8 644.2l4.4 5.1l-4.4 5.1l-4.4-5.1zM1069.9 644.2l4.4 5.1l-4.4 5.1l-4.4-5.1zM978.6 653.4l4.4 5.1l-4.4 5.1l-4.4-5.1zM1000.5 653.4l4.4 5.1l-4.4 5.1l-4.4-5.1zM1010.8 653.4l4.4 5.1l-4.4 5.1l-4.4-5.1zM1044.4 653.4l4.4 5.1l-4.4 5.1l-4.4-5.1zM1047.5 653.4l4.4 5.1l-4.4 5.1l-4.4-5.1zM1054.3 653.4l4.4 5.1l-4.4 5.1l-4.4-5.1zM1057.8 653.4l4.4 5.1l-4.4 5.1l-4.4-5.1zM1066.3 653.4l4.4 5.1l-4.4 5.1l-4.4-5.1zM1090.1 653.4l4.4 5.1l-4.4 5.1l-4.4-5.1zM979.0 662.3l4.4 5.1l-4.4 5.1l-4.4-5.1zM983.1 662.3l4.4 5.1l-4.4 5.1l-4.4-5.1zM992.0 662.3l4.4 5.1l-4.4 5.1l-4.4-5.1zM1010.4 662.3l4.4 5.1l-4.4 5.1l-4.4-5.1zM1015.3 662.3l4.4 5.1l-4.4 5.1l-4.4-5.1zM1020.7 662.3l4.4 5.1l-4.4 5.1l-4.4-5.1zM1025.6 662.3l4.4 5.1l-4.4 5.1l-4.4-5.1zM1032.8 662.3l4.4 5.1l-4.4 5.1l-4.4-5.1zM1036.8 662.3l4.4 5.1l-4.4 5.1l-4.4-5.1zM1044.0 662.3l4.4 5.1l-4.4 5.1l-4.4-5.1zM1046.2 662.3l4.4 5.1l-4.4 5.1l-4.4-5.1zM1055.1 662.3l4.4 5.1l-4.4 5.1l-4.4-5.1zM1057.8 662.3l4.4 5.1l-4.4 5.1l-4.4-5.1zM1065.0 662.3l4.4 5.1l-4.4 5.1l-4.4-5.1zM1076.2 662.3l4.4 5.1l-4.4 5.1l-4.4-5.1zM1078.9 662.3l4.4 5.1l-4.4 5.1l-4.4-5.1zM1087.4 662.3l4.4 5.1l-4.4 5.1l-4.4-5.1zM1090.5 662.3l4.4 5.1l-4.4 5.1l-4.4-5.1zM980.4 671.1l4.4 5.1l-4.4 5.1l-4.4-5.1zM1002.8 671.1l4.4 5.1l-4.4 5.1l-4.4-5.1zM1024.7 671.1l4.4 5.1l-4.4 5.1l-4.4-5.1zM1032.8 671.1l4.4 5.1l-4.4 5.1l-4.4-5.1zM1037.7 671.1l4.4 5.1l-4.4 5.1l-4.4-5.1zM1056.5 671.1l4.4 5.1l-4.4 5.1l-4.4-5.1zM1067.2 671.1l4.4 5.1l-4.4 5.1l-4.4-5.1zM1085.1 671.1l4.4 5.1l-4.4 5.1l-4.4-5.1zM1088.7 671.1l4.4 5.1l-4.4 5.1l-4.4-5.1zM993.4 679.2l4.4 5.1l-4.4 5.1l-4.4-5.1zM995.6 679.2l4.4 5.1l-4.4 5.1l-4.4-5.1zM1075.3 704.2l4.4 5.1l-4.4 5.1l-4.4-5.1zM1085.6 704.2l4.4 5.1l-4.4 5.1l-4.4-5.1zM1095.0 704.2l4.4 5.1l-4.4 5.1l-4.4-5.1zM1065.0 712.3l4.4 5.1l-4.4 5.1l-4.4-5.1zM1075.7 712.3l4.4 5.1l-4.4 5.1l-4.4-5.1zM1079.3 712.3l4.4 5.1l-4.4 5.1l-4.4-5.1zM1087.4 712.3l4.4 5.1l-4.4 5.1l-4.4-5.1zM1094.6 712.3l4.4 5.1l-4.4 5.1l-4.4-5.1zM1152.8 644.2l4.4 5.1l-4.4 5.1l-4.4-5.1zM1119.6 653.4l4.4 5.1l-4.4 5.1l-4.4-5.1zM1122.3 653.4l4.4 5.1l-4.4 5.1l-4.4-5.1zM1131.3 653.4l4.4 5.1l-4.4 5.1l-4.4-5.1zM1133.5 653.4l4.4 5.1l-4.4 5.1l-4.4-5.1zM1140.7 653.4l4.4 5.1l-4.4 5.1l-4.4-5.1zM1144.3 653.4l4.4 5.1l-4.4 5.1l-4.4-5.1zM1151.0 653.4l4.4 5.1l-4.4 5.1l-4.4-5.1zM1155.9 653.4l4.4 5.1l-4.4 5.1l-4.4-5.1zM1108.4 662.3l4.4 5.1l-4.4 5.1l-4.4-5.1zM1111.1 662.3l4.4 5.1l-4.4 5.1l-4.4-5.1zM1121.0 662.3l4.4 5.1l-4.4 5.1l-4.4-5.1zM1128.1 662.3l4.4 5.1l-4.4 5.1l-4.4-5.1zM1138.4 662.3l4.4 5.1l-4.4 5.1l-4.4-5.1zM1142.9 662.3l4.4 5.1l-4.4 5.1l-4.4-5.1zM1154.6 662.3l4.4 5.1l-4.4 5.1l-4.4-5.1zM1166.6 662.3l4.4 5.1l-4.4 5.1l-4.4-5.1zM1173.4 662.3l4.4 5.1l-4.4 5.1l-4.4-5.1zM1175.1 662.3l4.4 5.1l-4.4 5.1l-4.4-5.1zM1109.3 671.1l4.4 5.1l-4.4 5.1l-4.4-5.1zM1112.0 671.1l4.4 5.1l-4.4 5.1l-4.4-5.1zM1121.4 671.1l4.4 5.1l-4.4 5.1l-4.4-5.1zM1129.5 671.1l4.4 5.1l-4.4 5.1l-4.4-5.1zM1131.3 671.1l4.4 5.1l-4.4 5.1l-4.4-5.1zM1150.1 671.1l4.4 5.1l-4.4 5.1l-4.4-5.1zM1164.9 671.1l4.4 5.1l-4.4 5.1l-4.4-5.1zM1173.4 671.1l4.4 5.1l-4.4 5.1l-4.4-5.1zM1196.6 671.1l4.4 5.1l-4.4 5.1l-4.4-5.1zM1204.3 671.1l4.4 5.1l-4.4 5.1l-4.4-5.1zM1213.2 671.1l4.4 5.1l-4.4 5.1l-4.4-5.1zM1106.6 679.2l4.4 5.1l-4.4 5.1l-4.4-5.1zM1118.3 679.2l4.4 5.1l-4.4 5.1l-4.4-5.1zM1150.5 679.2l4.4 5.1l-4.4 5.1l-4.4-5.1zM1161.3 679.2l4.4 5.1l-4.4 5.1l-4.4-5.1zM1176.5 679.2l4.4 5.1l-4.4 5.1l-4.4-5.1zM1183.7 679.2l4.4 5.1l-4.4 5.1l-4.4-5.1zM1196.2 679.2l4.4 5.1l-4.4 5.1l-4.4-5.1zM1198.4 679.2l4.4 5.1l-4.4 5.1l-4.4-5.1zM1206.9 679.2l4.4 5.1l-4.4 5.1l-4.4-5.1zM1212.3 679.2l4.4 5.1l-4.4 5.1l-4.4-5.1zM1149.2 687.2l4.4 5.1l-4.4 5.1l-4.4-5.1zM1164.0 687.2l4.4 5.1l-4.4 5.1l-4.4-5.1zM1170.7 687.2l4.4 5.1l-4.4 5.1l-4.4-5.1zM1192.6 687.2l4.4 5.1l-4.4 5.1l-4.4-5.1zM1202.5 687.2l4.4 5.1l-4.4 5.1l-4.4-5.1zM1211.4 687.2l4.4 5.1l-4.4 5.1l-4.4-5.1zM1107.1 696.2l4.4 5.1l-4.4 5.1l-4.4-5.1zM1119.6 696.2l4.4 5.1l-4.4 5.1l-4.4-5.1zM1152.8 696.2l4.4 5.1l-4.4 5.1l-4.4-5.1zM1159.9 696.2l4.4 5.1l-4.4 5.1l-4.4-5.1zM1171.1 696.2l4.4 5.1l-4.4 5.1l-4.4-5.1zM1175.6 696.2l4.4 5.1l-4.4 5.1l-4.4-5.1zM1204.3 696.2l4.4 5.1l-4.4 5.1l-4.4-5.1zM1206.9 696.2l4.4 5.1l-4.4 5.1l-4.4-5.1zM1215.0 696.2l4.4 5.1l-4.4 5.1l-4.4-5.1zM1098.6 704.2l4.4 5.1l-4.4 5.1l-4.4-5.1zM1120.1 704.2l4.4 5.1l-4.4 5.1l-4.4-5.1zM1151.9 704.2l4.4 5.1l-4.4 5.1l-4.4-5.1zM1159.9 704.2l4.4 5.1l-4.4 5.1l-4.4-5.1zM1171.6 704.2l4.4 5.1l-4.4 5.1l-4.4-5.1zM1181.0 704.2l4.4 5.1l-4.4 5.1l-4.4-5.1zM1185.9 704.2l4.4 5.1l-4.4 5.1l-4.4-5.1zM1194.0 704.2l4.4 5.1l-4.4 5.1l-4.4-5.1zM1198.0 704.2l4.4 5.1l-4.4 5.1l-4.4-5.1zM1097.7 712.3l4.4 5.1l-4.4 5.1l-4.4-5.1zM1108.4 712.3l4.4 5.1l-4.4 5.1l-4.4-5.1zM1112.0 712.3l4.4 5.1l-4.4 5.1l-4.4-5.1zM1117.4 712.3l4.4 5.1l-4.4 5.1l-4.4-5.1zM1123.2 712.3l4.4 5.1l-4.4 5.1l-4.4-5.1zM1129.9 712.3l4.4 5.1l-4.4 5.1l-4.4-5.1zM1140.7 712.3l4.4 5.1l-4.4 5.1l-4.4-5.1zM1144.3 712.3l4.4 5.1l-4.4 5.1l-4.4-5.1zM1155.0 712.3l4.4 5.1l-4.4 5.1l-4.4-5.1zM1163.1 712.3l4.4 5.1l-4.4 5.1l-4.4-5.1zM1165.7 712.3l4.4 5.1l-4.4 5.1l-4.4-5.1zM1174.3 712.3l4.4 5.1l-4.4 5.1l-4.4-5.1zM1182.3 712.3l4.4 5.1l-4.4 5.1l-4.4-5.1zM1187.2 712.3l4.4 5.1l-4.4 5.1l-4.4-5.1zM1196.2 712.3l4.4 5.1l-4.4 5.1l-4.4-5.1zM1217.1 662.3l4.4 5.1l-4.4 5.1l-4.4-5.1zM1220.2 662.3l4.4 5.1l-4.4 5.1l-4.4-5.1zM1218.0 671.1l4.4 5.1l-4.4 5.1l-4.4-5.1zM1218.4 679.2l4.4 5.1l-4.4 5.1l-4.4-5.1zM1208.1 687.2l4.4 5.1l-4.4 5.1l-4.4-5.1zM1217.5 687.2l4.4 5.1l-4.4 5.1l-4.4-5.1zM1217.5 696.2l4.4 5.1l-4.4 5.1l-4.4-5.1zM1225.1 696.2l4.4 5.1l-4.4 5.1l-4.4-5.1zM690.4 720.2l4.4 5.1l-4.4 5.1l-4.4-5.1zM693.5 720.2l4.4 5.1l-4.4 5.1l-4.4-5.1zM717.1 720.2l4.4 5.1l-4.4 5.1l-4.4-5.1zM770.1 720.2l4.4 5.1l-4.4 5.1l-4.4-5.1zM684.6 727.4l4.4 5.1l-4.4 5.1l-4.4-5.1zM690.4 727.4l4.4 5.1l-4.4 5.1l-4.4-5.1zM693.5 727.4l4.4 5.1l-4.4 5.1l-4.4-5.1zM713.7 727.4l4.4 5.1l-4.4 5.1l-4.4-5.1zM726.6 727.4l4.4 5.1l-4.4 5.1l-4.4-5.1zM733.5 727.4l4.4 5.1l-4.4 5.1l-4.4-5.1zM757.4 727.4l4.4 5.1l-4.4 5.1l-4.4-5.1zM774.6 727.4l4.4 5.1l-4.4 5.1l-4.4-5.1zM732.0 735.4l4.4 5.1l-4.4 5.1l-4.4-5.1zM766.3 735.4l4.4 5.1l-4.4 5.1l-4.4-5.1zM778.9 719.5l4.4 5.1l-4.4 5.1l-4.4-5.1zM796.3 719.5l4.4 5.1l-4.4 5.1l-4.4-5.1zM775.9 720.2l4.4 5.1l-4.4 5.1l-4.4-5.1zM779.5 720.2l4.4 5.1l-4.4 5.1l-4.4-5.1zM796.2 720.2l4.4 5.1l-4.4 5.1l-4.4-5.1zM797.4 727.4l4.4 5.1l-4.4 5.1l-4.4-5.1zM800.5 727.4l4.4 5.1l-4.4 5.1l-4.4-5.1zM878.0 727.4l4.4 5.1l-4.4 5.1l-4.4-5.1zM818.0 735.0l4.4 5.1l-4.4 5.1l-4.4-5.1zM822.5 735.0l4.4 5.1l-4.4 5.1l-4.4-5.1zM831.4 735.0l4.4 5.1l-4.4 5.1l-4.4-5.1zM866.8 735.0l4.4 5.1l-4.4 5.1l-4.4-5.1zM873.1 735.0l4.4 5.1l-4.4 5.1l-4.4-5.1zM788.4 742.1l4.4 5.1l-4.4 5.1l-4.4-5.1zM799.4 742.1l4.4 5.1l-4.4 5.1l-4.4-5.1zM818.0 742.1l4.4 5.1l-4.4 5.1l-4.4-5.1zM822.0 742.1l4.4 5.1l-4.4 5.1l-4.4-5.1zM824.7 742.1l4.4 5.1l-4.4 5.1l-4.4-5.1zM865.4 742.1l4.4 5.1l-4.4 5.1l-4.4-5.1zM871.3 742.1l4.4 5.1l-4.4 5.1l-4.4-5.1zM883.8 742.1l4.4 5.1l-4.4 5.1l-4.4-5.1zM895.0 742.1l4.4 5.1l-4.4 5.1l-4.4-5.1zM806.3 749.3l4.4 5.1l-4.4 5.1l-4.4-5.1zM809.0 749.3l4.4 5.1l-4.4 5.1l-4.4-5.1zM821.6 749.3l4.4 5.1l-4.4 5.1l-4.4-5.1zM829.2 749.3l4.4 5.1l-4.4 5.1l-4.4-5.1zM832.8 749.3l4.4 5.1l-4.4 5.1l-4.4-5.1zM839.5 749.3l4.4 5.1l-4.4 5.1l-4.4-5.1zM843.1 749.3l4.4 5.1l-4.4 5.1l-4.4-5.1zM849.3 749.3l4.4 5.1l-4.4 5.1l-4.4-5.1zM860.5 749.3l4.4 5.1l-4.4 5.1l-4.4-5.1zM865.4 749.3l4.4 5.1l-4.4 5.1l-4.4-5.1zM875.3 749.3l4.4 5.1l-4.4 5.1l-4.4-5.1zM883.4 749.3l4.4 5.1l-4.4 5.1l-4.4-5.1zM886.9 749.3l4.4 5.1l-4.4 5.1l-4.4-5.1zM894.1 749.3l4.4 5.1l-4.4 5.1l-4.4-5.1zM823.4 756.5l4.4 5.1l-4.4 5.1l-4.4-5.1zM841.7 756.5l4.4 5.1l-4.4 5.1l-4.4-5.1zM861.4 756.5l4.4 5.1l-4.4 5.1l-4.4-5.1zM873.5 756.5l4.4 5.1l-4.4 5.1l-4.4-5.1zM876.2 756.5l4.4 5.1l-4.4 5.1l-4.4-5.1zM894.6 756.5l4.4 5.1l-4.4 5.1l-4.4-5.1zM809.0 763.6l4.4 5.1l-4.4 5.1l-4.4-5.1zM812.6 763.6l4.4 5.1l-4.4 5.1l-4.4-5.1zM892.3 763.6l4.4 5.1l-4.4 5.1l-4.4-5.1zM823.4 770.8l4.4 5.1l-4.4 5.1l-4.4-5.1zM855.9 770.8l4.4 5.1l-4.4 5.1l-4.4-5.1zM810.8 777.1l4.4 5.1l-4.4 5.1l-4.4-5.1zM830.5 777.1l4.4 5.1l-4.4 5.1l-4.4-5.1zM844.0 777.1l4.4 5.1l-4.4 5.1l-4.4-5.1zM852.9 777.1l4.4 5.1l-4.4 5.1l-4.4-5.1zM856.0 777.1l4.4 5.1l-4.4 5.1l-4.4-5.1zM865.4 777.1l4.4 5.1l-4.4 5.1l-4.4-5.1zM869.0 777.1l4.4 5.1l-4.4 5.1l-4.4-5.1zM874.0 777.1l4.4 5.1l-4.4 5.1l-4.4-5.1zM894.6 777.1l4.4 5.1l-4.4 5.1l-4.4-5.1zM811.1 784.2l4.4 5.1l-4.4 5.1l-4.4-5.1zM863.2 784.2l4.4 5.1l-4.4 5.1l-4.4-5.1zM872.6 784.2l4.4 5.1l-4.4 5.1l-4.4-5.1zM876.6 784.2l4.4 5.1l-4.4 5.1l-4.4-5.1zM938.9 720.2l4.4 5.1l-4.4 5.1l-4.4-5.1zM1009.6 720.2l4.4 5.1l-4.4 5.1l-4.4-5.1zM999.3 727.4l4.4 5.1l-4.4 5.1l-4.4-5.1zM909.3 735.0l4.4 5.1l-4.4 5.1l-4.4-5.1zM980.5 735.0l4.4 5.1l-4.4 5.1l-4.4-5.1zM989.5 735.0l4.4 5.1l-4.4 5.1l-4.4-5.1zM909.3 742.1l4.4 5.1l-4.4 5.1l-4.4-5.1zM919.6 742.1l4.4 5.1l-4.4 5.1l-4.4-5.1zM940.2 742.1l4.4 5.1l-4.4 5.1l-4.4-5.1zM979.6 742.1l4.4 5.1l-4.4 5.1l-4.4-5.1zM984.6 742.1l4.4 5.1l-4.4 5.1l-4.4-5.1zM904.0 749.3l4.4 5.1l-4.4 5.1l-4.4-5.1zM915.6 749.3l4.4 5.1l-4.4 5.1l-4.4-5.1zM925.9 749.3l4.4 5.1l-4.4 5.1l-4.4-5.1zM929.5 749.3l4.4 5.1l-4.4 5.1l-4.4-5.1zM937.1 749.3l4.4 5.1l-4.4 5.1l-4.4-5.1zM946.5 749.3l4.4 5.1l-4.4 5.1l-4.4-5.1zM957.2 749.3l4.4 5.1l-4.4 5.1l-4.4-5.1zM968.9 749.3l4.4 5.1l-4.4 5.1l-4.4-5.1zM979.6 749.3l4.4 5.1l-4.4 5.1l-4.4-5.1zM988.1 749.3l4.4 5.1l-4.4 5.1l-4.4-5.1zM1012.3 749.3l4.4 5.1l-4.4 5.1l-4.4-5.1zM900.4 756.5l4.4 5.1l-4.4 5.1l-4.4-5.1zM905.3 756.5l4.4 5.1l-4.4 5.1l-4.4-5.1zM916.0 756.5l4.4 5.1l-4.4 5.1l-4.4-5.1zM925.4 756.5l4.4 5.1l-4.4 5.1l-4.4-5.1zM930.8 756.5l4.4 5.1l-4.4 5.1l-4.4-5.1zM938.0 756.5l4.4 5.1l-4.4 5.1l-4.4-5.1zM950.5 756.5l4.4 5.1l-4.4 5.1l-4.4-5.1zM961.3 756.5l4.4 5.1l-4.4 5.1l-4.4-5.1zM971.1 756.5l4.4 5.1l-4.4 5.1l-4.4-5.1zM981.0 756.5l4.4 5.1l-4.4 5.1l-4.4-5.1zM992.6 756.5l4.4 5.1l-4.4 5.1l-4.4-5.1zM1001.1 756.5l4.4 5.1l-4.4 5.1l-4.4-5.1zM1005.6 756.5l4.4 5.1l-4.4 5.1l-4.4-5.1zM904.0 763.6l4.4 5.1l-4.4 5.1l-4.4-5.1zM928.6 763.6l4.4 5.1l-4.4 5.1l-4.4-5.1zM938.9 763.6l4.4 5.1l-4.4 5.1l-4.4-5.1zM950.5 763.6l4.4 5.1l-4.4 5.1l-4.4-5.1zM963.5 763.6l4.4 5.1l-4.4 5.1l-4.4-5.1zM972.5 763.6l4.4 5.1l-4.4 5.1l-4.4-5.1zM991.7 763.6l4.4 5.1l-4.4 5.1l-4.4-5.1zM999.3 763.6l4.4 5.1l-4.4 5.1l-4.4-5.1zM1005.1 763.6l4.4 5.1l-4.4 5.1l-4.4-5.1zM1013.2 763.6l4.4 5.1l-4.4 5.1l-4.4-5.1zM898.1 770.8l4.4 5.1l-4.4 5.1l-4.4-5.1zM916.2 770.8l4.4 5.1l-4.4 5.1l-4.4-5.1zM938.4 770.8l4.4 5.1l-4.4 5.1l-4.4-5.1zM905.9 777.1l4.4 5.1l-4.4 5.1l-4.4-5.1zM929.0 777.1l4.4 5.1l-4.4 5.1l-4.4-5.1zM938.9 777.1l4.4 5.1l-4.4 5.1l-4.4-5.1zM949.2 777.1l4.4 5.1l-4.4 5.1l-4.4-5.1zM952.8 777.1l4.4 5.1l-4.4 5.1l-4.4-5.1zM983.2 777.1l4.4 5.1l-4.4 5.1l-4.4-5.1zM1004.4 777.1l4.4 5.1l-4.4 5.1l-4.4-5.1zM934.9 784.2l4.4 5.1l-4.4 5.1l-4.4-5.1zM1090.7 720.2l4.4 5.1l-4.4 5.1l-4.4-5.1zM1101.4 720.2l4.4 5.1l-4.4 5.1l-4.4-5.1zM1108.6 720.2l4.4 5.1l-4.4 5.1l-4.4-5.1zM1132.8 720.2l4.4 5.1l-4.4 5.1l-4.4-5.1zM1043.2 727.4l4.4 5.1l-4.4 5.1l-4.4-5.1zM1046.3 727.4l4.4 5.1l-4.4 5.1l-4.4-5.1zM1058.0 727.4l4.4 5.1l-4.4 5.1l-4.4-5.1zM1065.6 727.4l4.4 5.1l-4.4 5.1l-4.4-5.1zM1069.6 727.4l4.4 5.1l-4.4 5.1l-4.4-5.1zM1074.1 727.4l4.4 5.1l-4.4 5.1l-4.4-5.1zM1077.7 727.4l4.4 5.1l-4.4 5.1l-4.4-5.1zM1081.3 727.4l4.4 5.1l-4.4 5.1l-4.4-5.1zM1096.0 727.4l4.4 5.1l-4.4 5.1l-4.4-5.1zM1098.7 727.4l4.4 5.1l-4.4 5.1l-4.4-5.1zM1035.6 735.0l4.4 5.1l-4.4 5.1l-4.4-5.1zM1041.9 735.0l4.4 5.1l-4.4 5.1l-4.4-5.1zM1058.9 735.0l4.4 5.1l-4.4 5.1l-4.4-5.1zM1097.4 735.0l4.4 5.1l-4.4 5.1l-4.4-5.1zM1101.0 735.0l4.4 5.1l-4.4 5.1l-4.4-5.1zM1022.6 742.1l4.4 5.1l-4.4 5.1l-4.4-5.1zM1026.2 742.1l4.4 5.1l-4.4 5.1l-4.4-5.1zM1033.4 742.1l4.4 5.1l-4.4 5.1l-4.4-5.1zM1036.9 742.1l4.4 5.1l-4.4 5.1l-4.4-5.1zM1046.3 742.1l4.4 5.1l-4.4 5.1l-4.4-5.1zM1053.1 742.1l4.4 5.1l-4.4 5.1l-4.4-5.1zM1055.3 742.1l4.4 5.1l-4.4 5.1l-4.4-5.1zM1024.0 749.3l4.4 5.1l-4.4 5.1l-4.4-5.1zM1048.1 749.3l4.4 5.1l-4.4 5.1l-4.4-5.1zM1020.8 756.5l4.4 5.1l-4.4 5.1l-4.4-5.1zM1027.1 756.5l4.4 5.1l-4.4 5.1l-4.4-5.1zM1036.9 756.5l4.4 5.1l-4.4 5.1l-4.4-5.1zM1021.3 763.6l4.4 5.1l-4.4 5.1l-4.4-5.1zM1075.3 790.0l4.4 5.1l-4.4 5.1l-4.4-5.1zM1132.5 720.4l4.4 5.1l-4.4 5.1l-4.4-5.1zM1138.7 720.4l4.4 5.1l-4.4 5.1l-4.4-5.1zM1155.6 720.4l4.4 5.1l-4.4 5.1l-4.4-5.1zM641.9 886.3l4.4 5.1l-4.4 5.1l-4.4-5.1zM786.6 876.5l4.4 5.1l-4.4 5.1l-4.4-5.1zM808.4 866.2l4.4 5.1l-4.4 5.1l-4.4-5.1zM808.4 886.3l4.4 5.1l-4.4 5.1l-4.4-5.1zM834.4 928.4l4.4 5.1l-4.4 5.1l-4.4-5.1zM957.7 756.5l4.4 5.1l-4.4 5.1l-4.4-5.1zM973.5 756.5l4.4 5.1l-4.4 5.1l-4.4-5.1zM977.4 756.5l4.4 5.1l-4.4 5.1l-4.4-5.1zM984.6 756.5l4.4 5.1l-4.4 5.1l-4.4-5.1zM995.0 756.5l4.4 5.1l-4.4 5.1l-4.4-5.1zM982.0 749.3l4.4 5.1l-4.4 5.1l-4.4-5.1zM1014.5 749.3l4.4 5.1l-4.4 5.1l-4.4-5.1zM893.8 756.5l4.4 5.1l-4.4 5.1l-4.4-5.1zM897.1 756.5l4.4 5.1l-4.4 5.1l-4.4-5.1zM891.6 749.3l4.4 5.1l-4.4 5.1l-4.4-5.1zM896.5 749.3l4.4 5.1l-4.4 5.1l-4.4-5.1zM909.2 734.9l4.4 5.1l-4.4 5.1l-4.4-5.1zM1016.8 763.6l4.4 5.1l-4.4 5.1l-4.4-5.1zM941.0 756.5l4.4 5.1l-4.4 5.1l-4.4-5.1zM947.0 756.5l4.4 5.1l-4.4 5.1l-4.4-5.1zM911.0 749.3l4.4 5.1l-4.4 5.1l-4.4-5.1zM921.0 756.5l4.4 5.1l-4.4 5.1l-4.4-5.1zM933.5 749.3l4.4 5.1l-4.4 5.1l-4.4-5.1zM909.5 763.6l4.4 5.1l-4.4 5.1l-4.4-5.1zM915.0 763.6l4.4 5.1l-4.4 5.1l-4.4-5.1z"/>
<text x="922.2" y="468.6" font-size="12.3" text-anchor="middle" fill="#000">Scanning-HIS RT-DR Cloud Top Pressure</text>
<text x="670.2" y="973.4" font-size="11.5" text-anchor="middle" fill="#000">12:57</text>
<text x="757.4" y="973.4" font-size="11.5" text-anchor="middle" fill="#000">12:59</text>
<text x="844.3" y="973.4" font-size="11.5" text-anchor="middle" fill="#000">13:00</text>
<text x="931.2" y="973.4" font-size="11.5" text-anchor="middle" fill="#000">13:01</text>
<text x="1018.1" y="973.4" font-size="11.5" text-anchor="middle" fill="#000">13:03</text>
<text x="1104.9" y="973.4" font-size="11.5" text-anchor="middle" fill="#000">13:04</text>
<text x="1191.9" y="973.4" font-size="11.5" text-anchor="middle" fill="#000">13:06</text>
<text x="599.8" y="591.3" font-size="11" fill="#000">10</text><text x="612.4" y="580.6" font-size="10" font-weight="normal" fill="#000">2</text>
<text x="599.8" y="945.4" font-size="11" fill="#000">10</text><text x="612.4" y="934.7" font-size="10" font-weight="normal" fill="#000">3</text>
<text transform="translate(590 718.2) rotate(-90)" font-size="12" text-anchor="middle" fill="#000">P (hPa)</text>
</svg>
</body></html>
